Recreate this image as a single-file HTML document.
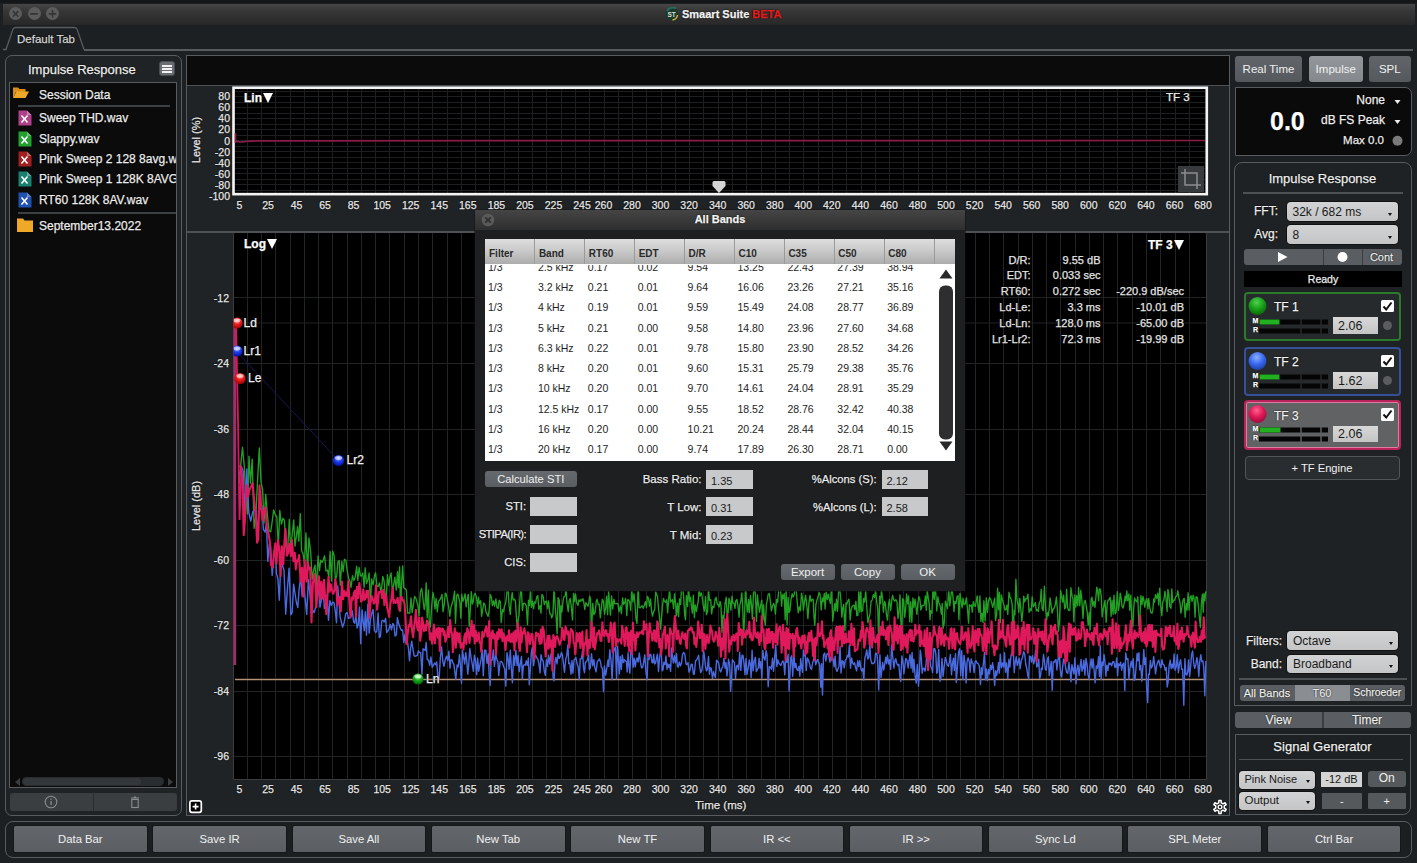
<!DOCTYPE html><html><head><meta charset="utf-8"><style>
*{margin:0;padding:0;box-sizing:border-box;}
html,body{width:1417px;height:863px;overflow:hidden;background:#1d2022;font-family:"Liberation Sans", sans-serif;color:#e8e8e8;}
.a{position:absolute;}
.t{position:absolute;white-space:nowrap;line-height:1;text-shadow:0 0 1.5px #000,0 0 1px #000;-webkit-text-stroke:0.25px currentColor;}
.dd .t,.inp .t{text-shadow:none;-webkit-text-stroke:0;}
.btn{position:absolute;background:linear-gradient(#666a6e,#5a5e62);border-radius:3px;color:#f0f0f0;text-align:center;font-size:12px;}
.inp{position:absolute;background:#c8c9ca;color:#1a1a1a;font-size:11px;}
.dd{position:absolute;background:linear-gradient(#d2d3d4,#c4c5c6);border-radius:4px;color:#1a1a1a;font-size:12px;box-shadow:0 0 0 1px #111;}
.dd:after{content:"";position:absolute;right:5.5px;bottom:5.5px;border-left:2.8px solid transparent;border-right:2.8px solid transparent;border-top:3.6px solid #111;}
</style></head><body>
<div class="a" style="left:0;top:0;width:1417px;height:3px;background:#141618"></div>
<div class="a" style="left:2.5px;top:3.5px;width:1412px;height:21px;background:linear-gradient(#464646,#383838 30%,#2c2c2c 80%,#282828)"></div>
<div class="a" style="left:9.0px;top:7.3px;width:13px;height:13px;border-radius:50%;background:#5c5c5c"></div>
<div class="a" style="left:27.5px;top:7.3px;width:13px;height:13px;border-radius:50%;background:#5c5c5c"></div>
<div class="a" style="left:46.0px;top:7.3px;width:13px;height:13px;border-radius:50%;background:#5c5c5c"></div>
<svg class="a" style="left:0;top:0" width="70" height="28"><path d="M12.8 11.1l5.6 5.6M18.4 11.1l-5.6 5.6" stroke="#353535" stroke-width="1.6"/><path d="M30.3 13.9h7.6" stroke="#353535" stroke-width="1.8"/><path d="M48.8 13.9h7.4M52.5 10v7.8" stroke="#353535" stroke-width="1.6"/></svg>
<svg class="a" style="left:665px;top:7px" width="14" height="14"><circle cx="7" cy="7" r="6.5" fill="#1a3a2a"/><path d="M2 4a6.5 6.5 0 0 1 9-2.5" stroke="#2a6a5a" stroke-width="2" fill="none"/><path d="M12.5 8a6 6 0 0 1-5 5" stroke="#c8b040" stroke-width="1.6" fill="none"/><text x="2.5" y="10" font-size="6.5" font-weight="bold" fill="#ddd" font-family="Liberation Sans">ST</text></svg>
<div class="t" style="left:682px;top:8.5px;font-size:11px;font-weight:bold;color:#f4f4f4">Smaart Suite <span style="color:#e02020">BETA</span></div>
<div class="a" style="left:84px;top:49px;width:1329px;height:1.5px;background:#585c5f"></div>
<svg class="a" style="left:0;top:25px" width="100" height="26"><path d="M3 24.5 H6 L13 4 Q14 2.5 16 2.5 H74 Q76 2.5 77 4 L84 24.5" fill="#1d2022" stroke="#585c5f" stroke-width="1.3"/></svg>
<div class="t" style="left:17px;top:33.5px;font-size:11.5px;color:#d8d8d8">Default Tab</div>
<div class="a" style="left:5px;top:55px;width:177px;height:761px;border:1px solid #585c60;border-radius:7px 7px 7px 7px;background:#202325"></div>
<div class="t" style="left:28px;top:63px;font-size:13px;color:#f0f0f0">Impulse Response</div>
<div class="a" style="left:159px;top:61px;width:16px;height:15px;border-radius:3px;background:#6a6e72;border:1px solid #4a4e52"></div>
<div class="a" style="left:162px;top:65px;width:10px;height:1.5px;background:#f0f0f0;box-shadow:0 3px 0 #f0f0f0,0 6px 0 #f0f0f0"></div>
<div class="a" style="left:9px;top:82px;width:168px;height:706px;background:#0b0b0b;border:1px solid #585c60"></div>
<div class="a" style="left:10px;top:83px;width:166px;height:704px;overflow:hidden">
<svg class="a" style="left:2px;top:2px" width="18" height="16"><path d="M1 2.5h5l1.5 1.5h6v3H4L1 13z" fill="#d8901a"/><path d="M1 13L4.5 6.5H17L13.5 13z" fill="#f0a828"/></svg>
<div class="t" style="left:29px;top:5.5px;font-size:12px;color:#ececec">Session Data</div>
<div class="a" style="left:8px;top:22px;width:152px;height:2px;background:#3c4043"></div>
<svg class="a" style="left:8px;top:27.3px" width="14" height="16"><path d="M0.5 0.5h8.5l4.5 4.5v10.5h-13z" fill="#b0408a"/><path d="M9 0.5v4.5h4.5" fill="#ffffff55"/><path d="M3.5 5.5l6 7M9.5 5.5l-6 7" stroke="#fff" stroke-width="1.6"/></svg>
<div class="t" style="left:29px;top:29.3px;font-size:12px;color:#ececec">Sweep THD.wav</div>
<svg class="a" style="left:8px;top:47.7px" width="14" height="16"><path d="M0.5 0.5h8.5l4.5 4.5v10.5h-13z" fill="#22a030"/><path d="M9 0.5v4.5h4.5" fill="#ffffff55"/><path d="M3.5 5.5l6 7M9.5 5.5l-6 7" stroke="#fff" stroke-width="1.6"/></svg>
<div class="t" style="left:29px;top:49.7px;font-size:12px;color:#ececec">Slappy.wav</div>
<svg class="a" style="left:8px;top:68.0px" width="14" height="16"><path d="M0.5 0.5h8.5l4.5 4.5v10.5h-13z" fill="#a02020"/><path d="M9 0.5v4.5h4.5" fill="#ffffff55"/><path d="M3.5 5.5l6 7M9.5 5.5l-6 7" stroke="#fff" stroke-width="1.6"/></svg>
<div class="t" style="left:29px;top:70.0px;font-size:12px;color:#ececec">Pink Sweep 2 128 8avg.wav</div>
<svg class="a" style="left:8px;top:88.3px" width="14" height="16"><path d="M0.5 0.5h8.5l4.5 4.5v10.5h-13z" fill="#1a8070"/><path d="M9 0.5v4.5h4.5" fill="#ffffff55"/><path d="M3.5 5.5l6 7M9.5 5.5l-6 7" stroke="#fff" stroke-width="1.6"/></svg>
<div class="t" style="left:29px;top:90.3px;font-size:12px;color:#ececec">Pink Sweep 1 128K 8AVG.wav</div>
<svg class="a" style="left:8px;top:108.7px" width="14" height="16"><path d="M0.5 0.5h8.5l4.5 4.5v10.5h-13z" fill="#2050b0"/><path d="M9 0.5v4.5h4.5" fill="#ffffff55"/><path d="M3.5 5.5l6 7M9.5 5.5l-6 7" stroke="#fff" stroke-width="1.6"/></svg>
<div class="t" style="left:29px;top:110.7px;font-size:12px;color:#ececec">RT60 128K 8AV.wav</div>
<div class="a" style="left:8px;top:129px;width:158px;height:2px;background:#3c4043"></div>
<svg class="a" style="left:6px;top:134px" width="18" height="16"><path d="M1 1.5h6l1.5 2h8.5v11.5H1z" fill="#f0a828"/></svg>
<div class="t" style="left:29px;top:136.5px;font-size:12px;color:#ececec">September13.2022</div>
</div>
<div class="a" style="left:22px;top:777px;width:142px;height:9px;border-radius:5px;background:#2a2d2f"></div>
<div class="a" style="left:23px;top:778px;width:118px;height:7px;border-radius:4px;background:#34373a"></div>
<svg class="a" style="left:12px;top:776px" width="165" height="12"><path d="M3 6l5-4v8z" fill="#3a3d40"/><path d="M161 6l-5-4v8z" fill="#3a3d40"/></svg>
<div class="a" style="left:10px;top:793px;width:167px;height:18px;border-radius:3px;background:#3a3e41"></div>
<div class="a" style="left:93px;top:793px;width:1px;height:18px;background:#2a2d30"></div>
<svg class="a" style="left:40px;top:795px" width="120" height="15"><circle cx="11" cy="7" r="5.8" fill="none" stroke="#8a8d90" stroke-width="1.1"/><rect x="10.4" y="6" width="1.3" height="4" fill="#8a8d90"/><rect x="10.4" y="3.6" width="1.3" height="1.3" fill="#8a8d90"/><path d="M91 3h8M94 2h2" stroke="#8a8d90" stroke-width="1.1"/><rect x="91.8" y="4.5" width="6.4" height="8" fill="none" stroke="#8a8d90" stroke-width="1.1"/></svg>
<div class="a" style="left:186px;top:55px;width:1044px;height:761px;border:1px solid #585c60;background:#202325"></div>
<div class="a" style="left:187px;top:56px;width:1042px;height:29px;background:#0b0b0b"></div>
<div class="a" style="left:187px;top:85px;width:1042px;height:1px;background:#4d5154"></div>
<div class="a" style="left:187px;top:231px;width:1042px;height:2px;background:#4d5154"></div>
<svg class="a" style="left:0;top:0" width="1417" height="863">
<rect x="235" y="89" width="970" height="104" fill="#000"/>
<path d="M247.5 89V193 M261.5 89V193 M275.5 89V193 M290.5 89V193 M304.5 89V193 M318.5 89V193 M332.5 89V193 M347.5 89V193 M361.5 89V193 M375.5 89V193 M389.5 89V193 M404.5 89V193 M418.5 89V193 M432.5 89V193 M447.5 89V193 M461.5 89V193 M475.5 89V193 M489.5 89V193 M504.5 89V193 M518.5 89V193 M532.5 89V193 M546.5 89V193 M561.5 89V193 M575.5 89V193 M589.5 89V193 M604.5 89V193 M618.5 89V193 M632.5 89V193 M646.5 89V193 M661.5 89V193 M675.5 89V193 M689.5 89V193 M703.5 89V193 M718.5 89V193 M732.5 89V193 M746.5 89V193 M761.5 89V193 M775.5 89V193 M789.5 89V193 M803.5 89V193 M818.5 89V193 M832.5 89V193 M846.5 89V193 M861.5 89V193 M875.5 89V193 M889.5 89V193 M903.5 89V193 M918.5 89V193 M932.5 89V193 M946.5 89V193 M960.5 89V193 M975.5 89V193 M989.5 89V193 M1003.5 89V193 M1018.5 89V193 M1032.5 89V193 M1046.5 89V193 M1060.5 89V193 M1075.5 89V193 M1089.5 89V193 M1103.5 89V193 M1117.5 89V193 M1132.5 89V193 M1146.5 89V193 M1160.5 89V193 M1175.5 89V193 M1189.5 89V193 M235 91.5H1205 M235 96.5H1205 M235 102.5H1205 M235 107.5H1205 M235 113.5H1205 M235 118.5H1205 M235 124.5H1205 M235 129.5H1205 M235 135.5H1205 M235 140.5H1205 M235 146.5H1205 M235 151.5H1205 M235 157.5H1205 M235 162.5H1205 M235 168.5H1205 M235 173.5H1205 M235 179.5H1205 M235 184.5H1205 M235 190.5H1205" stroke="#1c1f1f" stroke-width="1"/>
<rect x="233.5" y="87.75" width="973.3" height="106.4" fill="none" stroke="#f4f4f4" stroke-width="2.6"/>
<path d="M235.5 133V143 M235.5 140.5 Q238 142.5 243 141.8 T260 140.8 L1205 140.5" stroke="#8a1c48" stroke-width="1.7" fill="none"/>
<path d="M714 181h10q1.5 0 1.5 1.5v3.5l-6.5 7-6.5-7v-3.5q0-1.5 1.5-1.5z" fill="#d4d4d4"/>
</svg>
<div class="t" style="left:244px;top:92px;font-size:12px;font-weight:bold;color:#fff">Lin<i style="display:inline-block;vertical-align:top;margin-top:1px;margin-left:1px;width:0;height:0;border-left:5px solid transparent;border-right:5px solid transparent;border-top:10px solid #fff"></i></div>
<div class="t" style="left:1166px;top:92px;font-size:11.5px;color:#eee">TF 3</div>
<div class="a" style="left:1178px;top:166px;width:26px;height:26px;background:#383b3e"></div>
<svg class="a" style="left:1178px;top:166px" width="26" height="26"><path d="M7 3V19H23 M3 7H19V23" stroke="#8a8d90" stroke-width="1.5" fill="none"/></svg>
<div class="t" style="right:1187px;top:91.2px;font-size:10.5px;color:#e8e8e8">80</div>
<div class="t" style="right:1187px;top:102.3px;font-size:10.5px;color:#e8e8e8">60</div>
<div class="t" style="right:1187px;top:113.4px;font-size:10.5px;color:#e8e8e8">40</div>
<div class="t" style="right:1187px;top:124.4px;font-size:10.5px;color:#e8e8e8">20</div>
<div class="t" style="right:1187px;top:135.5px;font-size:10.5px;color:#e8e8e8">0</div>
<div class="t" style="right:1187px;top:146.6px;font-size:10.5px;color:#e8e8e8">-20</div>
<div class="t" style="right:1187px;top:157.7px;font-size:10.5px;color:#e8e8e8">-40</div>
<div class="t" style="right:1187px;top:168.8px;font-size:10.5px;color:#e8e8e8">-60</div>
<div class="t" style="right:1187px;top:179.8px;font-size:10.5px;color:#e8e8e8">-80</div>
<div class="t" style="right:1187px;top:190.9px;font-size:10.5px;color:#e8e8e8">-100</div>
<div class="t" style="left:147px;width:100px;text-align:center;top:134px;height:12px;font-size:11px;color:#e8e8e8;transform:rotate(-90deg);transform-origin:50px 6px;">Level (%)</div>
<div class="t" style="left:219.4px;width:40px;text-align:center;top:199.5px;font-size:10.5px;color:#e8e8e8">5</div>
<div class="t" style="left:248.0px;width:40px;text-align:center;top:199.5px;font-size:10.5px;color:#e8e8e8">25</div>
<div class="t" style="left:276.5px;width:40px;text-align:center;top:199.5px;font-size:10.5px;color:#e8e8e8">45</div>
<div class="t" style="left:305.1px;width:40px;text-align:center;top:199.5px;font-size:10.5px;color:#e8e8e8">65</div>
<div class="t" style="left:333.6px;width:40px;text-align:center;top:199.5px;font-size:10.5px;color:#e8e8e8">85</div>
<div class="t" style="left:362.2px;width:40px;text-align:center;top:199.5px;font-size:10.5px;color:#e8e8e8">105</div>
<div class="t" style="left:390.7px;width:40px;text-align:center;top:199.5px;font-size:10.5px;color:#e8e8e8">125</div>
<div class="t" style="left:419.3px;width:40px;text-align:center;top:199.5px;font-size:10.5px;color:#e8e8e8">145</div>
<div class="t" style="left:447.8px;width:40px;text-align:center;top:199.5px;font-size:10.5px;color:#e8e8e8">165</div>
<div class="t" style="left:476.4px;width:40px;text-align:center;top:199.5px;font-size:10.5px;color:#e8e8e8">185</div>
<div class="t" style="left:504.9px;width:40px;text-align:center;top:199.5px;font-size:10.5px;color:#e8e8e8">205</div>
<div class="t" style="left:533.5px;width:40px;text-align:center;top:199.5px;font-size:10.5px;color:#e8e8e8">225</div>
<div class="t" style="left:562.0px;width:40px;text-align:center;top:199.5px;font-size:10.5px;color:#e8e8e8">245</div>
<div class="t" style="left:583.5px;width:40px;text-align:center;top:199.5px;font-size:10.5px;color:#e8e8e8">260</div>
<div class="t" style="left:612.0px;width:40px;text-align:center;top:199.5px;font-size:10.5px;color:#e8e8e8">280</div>
<div class="t" style="left:640.5px;width:40px;text-align:center;top:199.5px;font-size:10.5px;color:#e8e8e8">300</div>
<div class="t" style="left:669.1px;width:40px;text-align:center;top:199.5px;font-size:10.5px;color:#e8e8e8">320</div>
<div class="t" style="left:697.7px;width:40px;text-align:center;top:199.5px;font-size:10.5px;color:#e8e8e8">340</div>
<div class="t" style="left:726.2px;width:40px;text-align:center;top:199.5px;font-size:10.5px;color:#e8e8e8">360</div>
<div class="t" style="left:754.8px;width:40px;text-align:center;top:199.5px;font-size:10.5px;color:#e8e8e8">380</div>
<div class="t" style="left:783.3px;width:40px;text-align:center;top:199.5px;font-size:10.5px;color:#e8e8e8">400</div>
<div class="t" style="left:811.8px;width:40px;text-align:center;top:199.5px;font-size:10.5px;color:#e8e8e8">420</div>
<div class="t" style="left:840.4px;width:40px;text-align:center;top:199.5px;font-size:10.5px;color:#e8e8e8">440</div>
<div class="t" style="left:869.0px;width:40px;text-align:center;top:199.5px;font-size:10.5px;color:#e8e8e8">460</div>
<div class="t" style="left:897.5px;width:40px;text-align:center;top:199.5px;font-size:10.5px;color:#e8e8e8">480</div>
<div class="t" style="left:926.0px;width:40px;text-align:center;top:199.5px;font-size:10.5px;color:#e8e8e8">500</div>
<div class="t" style="left:954.6px;width:40px;text-align:center;top:199.5px;font-size:10.5px;color:#e8e8e8">520</div>
<div class="t" style="left:983.2px;width:40px;text-align:center;top:199.5px;font-size:10.5px;color:#e8e8e8">540</div>
<div class="t" style="left:1011.7px;width:40px;text-align:center;top:199.5px;font-size:10.5px;color:#e8e8e8">560</div>
<div class="t" style="left:1040.2px;width:40px;text-align:center;top:199.5px;font-size:10.5px;color:#e8e8e8">580</div>
<div class="t" style="left:1068.8px;width:40px;text-align:center;top:199.5px;font-size:10.5px;color:#e8e8e8">600</div>
<div class="t" style="left:1097.3px;width:40px;text-align:center;top:199.5px;font-size:10.5px;color:#e8e8e8">620</div>
<div class="t" style="left:1125.9px;width:40px;text-align:center;top:199.5px;font-size:10.5px;color:#e8e8e8">640</div>
<div class="t" style="left:1154.5px;width:40px;text-align:center;top:199.5px;font-size:10.5px;color:#e8e8e8">660</div>
<div class="t" style="left:1183.0px;width:40px;text-align:center;top:199.5px;font-size:10.5px;color:#e8e8e8">680</div>
<svg class="a" style="left:0;top:0" width="1417" height="863">
<rect x="233" y="233" width="974" height="546" fill="#000"/>
<path d="M247.5 233V779 M261.5 233V779 M275.5 233V779 M290.5 233V779 M304.5 233V779 M318.5 233V779 M332.5 233V779 M347.5 233V779 M361.5 233V779 M375.5 233V779 M389.5 233V779 M404.5 233V779 M418.5 233V779 M432.5 233V779 M447.5 233V779 M461.5 233V779 M475.5 233V779 M489.5 233V779 M504.5 233V779 M518.5 233V779 M532.5 233V779 M546.5 233V779 M561.5 233V779 M575.5 233V779 M589.5 233V779 M604.5 233V779 M618.5 233V779 M632.5 233V779 M646.5 233V779 M661.5 233V779 M675.5 233V779 M689.5 233V779 M703.5 233V779 M718.5 233V779 M732.5 233V779 M746.5 233V779 M761.5 233V779 M775.5 233V779 M789.5 233V779 M803.5 233V779 M818.5 233V779 M832.5 233V779 M846.5 233V779 M861.5 233V779 M875.5 233V779 M889.5 233V779 M903.5 233V779 M918.5 233V779 M932.5 233V779 M946.5 233V779 M960.5 233V779 M975.5 233V779 M989.5 233V779 M1003.5 233V779 M1018.5 233V779 M1032.5 233V779 M1046.5 233V779 M1060.5 233V779 M1075.5 233V779 M1089.5 233V779 M1103.5 233V779 M1117.5 233V779 M1132.5 233V779 M1146.5 233V779 M1160.5 233V779 M1175.5 233V779 M1189.5 233V779 M233 297.5H1207 M233 363.5H1207 M233 429.5H1207 M233 494.5H1207 M233 560.5H1207 M233 625.5H1207 M233 691.5H1207 M233 756.5H1207 M233 323H1207" stroke="#212424" stroke-width="1"/>
<path d="M233.5 233V779.5H1206.5V233" stroke="#3a3d40" stroke-width="1" fill="none"/>
<path d="M235 679.5H1206" stroke="#b89078" stroke-width="1.5"/>
<path d="M239.4 483.4L240.9 463.1L242.5 447.2L244.4 467.8L245.9 495.5L247.4 514.0L249.0 456.2L250.5 483.1L252.2 459.1L254.1 528.3L255.9 515.2L257.4 483.6L259.3 448.0L261.1 482.9L262.6 489.4L264.0 523.0L265.7 494.5L267.5 515.7L269.0 530.6L270.7 531.9L272.2 521.3L273.6 510.0L275.2 514.7L276.8 517.0L278.3 546.5L279.8 510.5L281.4 524.2L282.9 518.3L284.4 520.2L286.1 547.1L287.6 551.1L289.3 519.5L290.6 551.2L292.2 534.2L293.7 520.0L295.0 546.1L296.3 536.5L297.6 526.5L298.8 541.1L300.3 513.6L301.6 551.0L303.0 553.5L304.5 563.4L305.9 532.9L307.6 572.4L308.9 537.9L310.6 551.1L312.2 579.2L313.7 570.0L315.0 565.1L316.6 585.8L318.1 555.9L319.5 570.7L320.7 560.1L322.1 562.4L323.2 559.7L324.6 555.8L326.0 570.9L327.6 570.1L328.8 577.7L330.1 551.5L331.5 581.1L332.6 550.9L334.1 555.4L335.4 579.7L336.7 575.9L337.9 561.9L339.2 560.5L340.3 585.2L341.8 561.5L343.2 571.7L344.4 559.3L345.9 560.3L347.0 569.3L348.5 578.0L349.9 581.1L351.0 587.5L352.5 575.6L353.9 580.6L355.2 577.2L356.7 566.3L357.8 580.4L359.1 567.5L360.5 575.9L361.6 576.1L362.8 572.9L364.1 587.1L365.2 567.8L366.5 583.6L367.7 580.5L369.1 573.0L370.5 604.1L371.6 578.9L373.1 584.8L374.6 575.1L375.6 572.8L377.0 586.5L378.4 586.0L379.5 582.9L380.6 590.5L381.6 588.9L382.8 576.4L384.1 581.1L385.2 596.1L386.4 597.8L387.4 574.6L388.7 585.3L389.8 577.6L391.1 573.0L392.5 592.9L393.6 585.2L394.9 577.2L396.3 590.0L397.5 571.6L398.5 587.6L399.6 566.8L400.6 611.0L401.6 582.4L402.7 566.0L403.7 587.7L405.0 588.5L406.4 590.2L407.5 613.1L408.4 612.9L409.8 613.2L411.0 597.9L412.2 612.6L413.5 604.0L414.6 596.4L415.7 597.6L417.0 602.2L418.1 606.9L419.0 616.0L420.4 591.8L421.7 588.4L422.9 598.5L424.2 609.5L425.1 605.4L426.2 582.8L427.2 617.9L428.4 589.9L429.3 622.4L430.4 627.0L431.7 606.0L432.9 592.3L433.9 597.5L435.0 609.0L436.1 598.5L437.3 611.9L438.5 601.2L439.7 600.1L441.0 597.6L442.0 594.4L443.0 611.6L444.2 604.7L445.3 593.1L446.3 594.3L447.6 601.1L448.5 606.0L449.8 616.2L450.9 607.6L452.1 603.7L453.2 600.2L454.6 591.1L455.5 623.3L456.8 595.0L457.9 594.1L458.8 597.9L459.9 602.4L460.9 618.2L461.8 594.3L462.9 601.3L464.1 597.6L465.1 593.8L466.1 606.9L467.3 598.3L468.3 594.4L469.2 626.2L470.2 612.0L471.3 591.7L472.3 604.0L473.2 601.6L474.1 595.0L475.1 593.4L476.3 596.5L477.6 606.9L478.5 597.1L479.4 603.8L480.7 600.7L481.6 616.3L482.7 609.5L483.8 603.0L485.0 604.9L485.9 611.7L487.1 614.1L488.1 616.4L489.2 609.9L490.2 594.5L491.3 596.7L492.4 605.7L493.5 600.8L494.6 606.2L495.9 599.0L497.0 607.6L498.1 608.3L499.2 600.1L500.3 601.9L501.2 622.5L502.5 609.6L503.5 611.8L504.5 605.9L505.7 603.2L506.8 593.3L507.9 584.4L509.1 605.9L510.3 614.5L511.2 600.4L512.2 592.7L513.1 600.0L514.4 599.1L515.4 601.1L516.3 615.3L517.2 627.6L518.2 619.5L519.0 615.4L520.0 597.6L521.2 585.3L522.4 610.4L523.4 603.6L524.2 603.2L525.2 603.9L526.3 605.9L527.5 624.7L528.5 600.1L529.5 605.5L530.5 589.3L531.4 607.4L532.6 601.1L533.6 608.7L534.5 602.0L535.6 603.1L536.7 597.0L537.8 595.6L538.8 609.3L540.0 605.7L541.0 613.1L541.9 594.5L543.1 596.1L544.3 604.7L545.5 601.3L546.5 601.1L547.5 608.6L548.5 600.9L549.8 613.8L550.9 614.1L551.7 617.8L552.9 614.8L554.1 586.8L555.2 606.8L556.1 617.2L557.1 633.8L558.1 597.6L559.3 600.2L560.1 627.5L561.0 605.6L562.0 611.8L563.1 600.3L563.9 597.1L565.2 595.9L566.1 587.9L567.0 603.1L568.2 611.6L569.1 601.6L570.2 598.5L571.3 606.4L572.5 620.0L573.6 593.3L574.6 601.7L575.5 593.9L576.8 603.4L578.0 605.4L578.8 600.0L580.0 601.5L580.8 599.6L581.7 600.9L582.9 598.6L583.7 601.7L584.8 609.3L585.9 602.6L586.8 604.1L587.9 606.3L588.8 603.3L589.7 596.2L590.5 599.0L591.5 634.1L592.7 603.4L593.9 614.6L595.1 612.6L596.3 601.2L597.1 599.3L598.2 604.7L599.2 604.0L600.3 617.7L601.4 607.8L602.4 599.2L603.4 601.3L604.5 614.2L605.6 608.8L606.6 596.2L607.6 614.7L608.6 590.9L609.6 604.7L610.4 615.1L611.6 595.9L612.7 609.1L613.9 599.4L614.8 603.8L616.0 603.7L617.0 603.5L618.0 603.9L619.0 611.9L620.3 606.2L621.4 613.5L622.6 597.8L623.6 604.3L624.8 602.3L625.6 598.3L626.8 615.6L627.7 599.8L628.8 599.9L629.8 602.5L630.7 610.5L631.7 589.9L632.9 601.8L634.0 593.7L635.0 604.3L635.9 618.2L637.0 623.4L638.2 581.4L639.1 607.6L640.1 607.8L641.1 606.7L642.1 605.7L643.2 608.3L644.4 605.0L645.4 601.6L646.5 607.4L647.4 596.3L648.5 598.4L649.5 606.2L650.6 599.2L651.6 611.4L652.5 616.2L653.5 611.9L654.7 609.6L655.7 591.9L656.5 594.1L657.6 597.0L658.4 607.4L659.5 617.3L660.5 629.1L661.7 615.6L662.6 605.2L663.5 598.4L664.4 601.1L665.6 602.2L666.7 599.7L667.6 612.9L668.7 598.6L669.6 589.3L670.5 602.0L671.4 600.8L672.4 599.5L673.6 608.6L674.5 593.8L675.6 603.8L676.5 615.8L677.5 603.2L678.6 616.7L679.5 598.9L680.6 604.6L681.5 588.0L682.5 586.7L683.6 595.8L684.6 614.4L685.5 619.8L686.4 595.6L687.6 606.5L688.4 586.7L689.6 601.4L690.6 597.2L691.4 606.1L692.4 613.1L693.3 595.2L694.4 617.6L695.3 605.0L696.5 611.4L697.4 605.5L698.3 600.8L699.1 588.4L700.1 596.1L701.3 592.9L702.1 596.3L703.3 605.9L704.4 611.1L705.6 596.5L706.4 614.7L707.6 611.3L708.4 587.8L709.5 600.3L710.7 599.6L711.6 613.8L712.7 606.3L713.9 607.7L715.1 599.3L716.1 597.3L717.1 603.8L718.2 605.0L719.1 607.1L720.1 601.4L721.0 605.9L722.0 632.4L722.9 615.4L723.9 618.1L725.0 604.2L726.2 597.3L727.0 613.3L728.1 613.0L728.9 598.2L729.9 601.1L730.9 610.2L732.0 596.1L732.9 603.0L734.1 603.4L735.0 608.3L735.8 600.9L736.9 599.4L738.0 606.2L739.1 617.1L739.9 604.6L740.8 601.3L741.8 592.9L742.7 606.0L743.6 638.1L744.5 617.8L745.5 587.4L746.4 602.2L747.5 612.0L748.5 599.5L749.3 612.7L750.5 595.3L751.5 604.9L752.4 619.0L753.4 594.6L754.5 583.5L755.4 595.4L756.5 621.5L757.4 594.8L758.4 604.0L759.5 612.1L760.6 605.6L761.8 600.1L762.7 620.4L763.6 604.7L764.4 619.4L765.3 625.2L766.4 604.8L767.2 600.3L768.2 594.3L769.4 593.5L770.5 602.6L771.4 610.9L772.4 606.6L773.6 603.4L774.5 605.9L775.4 614.1L776.6 599.3L777.7 602.5L778.6 591.2L779.8 581.5L780.7 590.7L781.6 606.1L782.5 594.8L783.3 598.6L784.2 593.5L785.2 619.7L786.1 589.7L787.1 624.5L788.1 597.4L789.0 612.4L790.0 610.7L791.0 599.3L792.2 593.6L793.1 597.0L794.2 594.7L795.1 585.9L796.2 589.6L797.1 600.8L798.2 612.8L799.3 606.9L800.4 610.7L801.5 593.2L802.5 598.3L803.4 610.1L804.5 601.3L805.6 595.3L806.8 605.2L807.9 618.6L808.9 603.6L810.0 595.4L811.0 601.3L812.2 599.3L813.2 599.4L814.0 616.7L814.8 625.2L815.9 604.4L817.0 600.1L818.1 596.4L819.2 592.6L820.0 594.0L821.2 610.0L822.3 597.9L823.2 601.6L824.3 593.5L825.1 609.0L826.1 592.2L827.3 599.6L828.3 594.1L829.4 599.3L830.4 603.5L831.5 586.3L832.7 621.2L833.6 613.0L834.6 603.7L835.5 610.8L836.5 599.2L837.5 611.3L838.6 591.4L839.7 588.6L840.8 599.4L841.9 617.1L842.7 608.4L843.7 604.4L844.9 630.5L846.0 602.7L846.8 604.4L848.0 600.6L849.0 599.2L850.2 619.9L851.1 609.7L852.1 606.5L853.0 605.6L853.9 605.1L854.9 609.6L855.9 601.3L856.8 615.6L857.9 615.4L858.8 590.3L859.8 612.0L860.7 590.9L861.5 611.5L862.7 610.7L863.5 598.5L864.6 602.0L865.7 591.1L866.9 608.7L867.9 622.8L868.8 618.5L870.0 613.9L871.1 601.3L872.3 599.9L873.3 594.7L874.5 597.6L875.6 590.1L876.6 600.9L877.8 609.2L878.7 641.2L879.7 596.1L880.6 603.7L881.4 590.7L882.5 597.5L883.4 612.1L884.6 601.3L885.4 603.6L886.4 614.4L887.5 620.0L888.6 604.2L889.5 599.5L890.7 610.5L891.8 599.9L892.6 595.3L893.6 599.7L894.6 601.0L895.8 599.6L897.0 602.0L898.0 618.5L898.9 613.3L900.0 594.9L900.8 619.9L901.7 638.0L902.7 598.6L903.6 599.9L904.7 617.2L905.7 608.6L906.6 594.0L907.7 603.9L908.6 596.0L909.7 621.9L910.7 601.8L911.8 622.3L912.9 598.0L913.9 607.5L915.0 599.2L915.9 606.3L916.9 614.4L918.0 602.4L918.9 596.7L919.9 599.7L920.9 610.1L922.1 605.5L923.2 605.7L924.2 605.2L925.4 595.9L926.3 610.3L927.2 590.1L928.2 597.5L929.2 604.1L930.0 619.7L930.9 610.7L931.9 613.1L933.1 585.9L934.2 599.4L935.1 584.8L936.0 596.3L936.8 611.0L937.9 596.8L938.7 602.2L939.5 603.9L940.5 607.7L941.4 614.2L942.2 603.5L943.1 628.4L944.2 623.2L945.4 601.2L946.5 605.0L947.5 608.5L948.7 588.0L949.8 605.8L950.7 598.1L951.8 588.2L953.0 596.7L954.0 611.7L954.8 601.5L955.9 603.6L957.1 596.4L958.1 595.7L958.9 619.8L960.0 593.5L961.1 601.0L962.1 607.9L963.0 598.2L964.1 604.8L965.2 603.9L966.4 597.8L967.5 609.0L968.6 623.1L969.4 604.8L970.3 606.0L971.4 604.9L972.3 612.1L973.3 601.6L974.4 605.5L975.3 606.4L976.4 600.4L977.2 595.9L978.1 607.1L979.0 612.5L979.9 595.9L980.9 621.5L982.0 613.4L983.0 622.4L983.9 600.8L985.1 621.0L986.3 597.8L987.4 612.5L988.4 601.6L989.5 597.5L990.6 599.3L991.7 602.8L992.7 607.3L993.7 603.1L994.7 598.2L995.5 620.5L996.6 614.9L997.6 588.2L998.5 609.9L999.4 592.3L1000.3 622.8L1001.3 594.8L1002.3 599.5L1003.3 602.9L1004.1 605.6L1004.9 610.0L1005.9 609.6L1006.8 605.1L1007.8 614.4L1009.0 592.3L1010.1 597.7L1011.1 599.0L1012.2 604.9L1013.1 640.0L1014.1 610.3L1014.9 614.7L1015.9 579.3L1016.9 599.2L1018.0 604.7L1018.9 612.3L1019.7 598.4L1020.6 606.1L1021.8 621.5L1022.8 612.0L1023.7 596.2L1024.7 601.9L1025.8 598.7L1026.8 598.9L1027.9 594.1L1029.1 612.3L1030.3 608.8L1031.2 610.8L1032.2 596.8L1033.2 606.8L1034.2 605.2L1035.3 602.6L1036.4 610.9L1037.4 609.7L1038.3 611.3L1039.2 603.4L1040.4 600.9L1041.2 589.3L1042.1 608.7L1043.2 610.8L1044.4 586.3L1045.4 605.5L1046.6 620.1L1047.5 612.6L1048.3 615.9L1049.1 609.6L1050.1 597.9L1051.0 604.7L1052.1 613.1L1053.3 608.7L1054.1 608.1L1055.3 604.8L1056.4 597.0L1057.4 610.0L1058.5 631.2L1059.5 620.8L1060.6 590.4L1061.8 597.7L1062.6 602.1L1063.6 595.2L1064.7 608.9L1065.7 607.2L1066.6 589.2L1067.6 607.6L1068.7 610.4L1069.9 610.3L1070.9 587.7L1072.1 596.2L1073.0 598.9L1073.9 621.9L1074.8 594.9L1075.9 607.1L1076.7 595.6L1077.8 605.5L1078.6 587.5L1079.8 605.8L1080.8 590.3L1081.8 599.5L1083.0 618.4L1084.1 602.5L1085.2 600.4L1086.1 604.8L1087.1 611.1L1088.2 625.2L1089.2 612.6L1090.1 630.0L1091.1 599.6L1092.0 597.3L1092.9 606.3L1094.0 601.3L1095.0 607.3L1095.9 597.2L1096.8 587.1L1097.6 590.2L1098.6 600.7L1099.4 588.9L1100.4 589.2L1101.3 597.2L1102.2 616.9L1103.1 610.2L1104.1 605.0L1105.0 600.3L1106.2 622.3L1107.2 604.2L1108.1 600.1L1109.1 599.6L1110.2 597.3L1111.1 616.3L1112.1 600.3L1113.1 614.3L1114.0 595.3L1115.1 613.9L1116.2 611.9L1117.3 591.6L1118.4 610.3L1119.4 603.9L1120.2 593.1L1121.2 598.6L1122.0 606.1L1123.1 608.1L1124.2 603.1L1125.1 596.1L1125.9 600.8L1126.8 590.9L1127.7 600.6L1128.9 593.9L1129.7 610.3L1130.8 595.1L1131.8 619.0L1132.9 626.8L1133.7 608.2L1134.6 597.9L1135.8 600.8L1136.9 601.7L1137.8 596.8L1138.9 625.3L1139.9 617.7L1140.9 595.6L1142.0 604.6L1142.9 596.5L1143.7 599.4L1144.8 607.2L1145.9 600.9L1146.9 598.5L1147.9 609.0L1148.7 598.6L1149.7 606.9L1150.9 612.6L1152.0 613.2L1152.8 610.3L1153.7 599.0L1154.6 602.2L1155.5 594.7L1156.7 598.3L1157.8 593.2L1158.7 605.0L1159.7 588.3L1160.6 604.6L1161.8 615.6L1162.8 601.6L1163.8 600.3L1165.0 591.3L1165.9 597.1L1167.1 611.5L1167.9 589.4L1168.8 593.7L1169.8 606.9L1171.0 608.2L1171.8 588.9L1172.7 602.6L1173.6 600.4L1174.5 600.2L1175.7 596.7L1176.8 596.1L1177.8 590.8L1178.9 597.8L1180.1 603.3L1180.9 613.1L1182.0 607.2L1183.0 600.0L1184.2 598.4L1185.1 617.3L1186.3 603.6L1187.1 610.0L1188.1 592.8L1189.1 610.0L1190.0 597.6L1191.0 595.7L1192.1 601.3L1193.2 595.1L1194.1 598.9L1195.1 617.3L1196.0 597.0L1197.2 597.1L1198.1 603.6L1199.3 616.4L1200.4 627.5L1201.3 604.0L1202.4 594.1L1203.2 612.3L1204.0 593.5L1204.9 600.8L1205.8 591.3" stroke="#22a024" stroke-width="1.35" fill="none" stroke-linejoin="round"/>
<path d="M239.4 475.1L241.3 466.4L243.2 471.2L245.0 514.6L246.8 468.9L248.8 512.5L250.7 521.0L252.7 511.9L254.3 510.2L255.8 510.2L257.4 535.8L258.8 510.1L260.2 509.6L261.8 505.7L263.4 529.5L265.0 532.1L266.5 523.3L267.8 561.4L269.3 544.5L270.6 546.2L272.2 575.4L273.8 556.2L275.1 546.9L276.5 573.8L277.9 578.5L279.3 600.3L280.9 560.7L282.4 565.2L284.0 570.2L285.7 614.2L287.4 589.1L289.1 568.1L290.8 614.8L292.2 612.7L293.6 584.2L295.1 594.0L296.3 602.0L297.8 607.5L299.1 589.3L300.8 577.0L302.1 596.2L303.8 584.9L305.3 600.4L306.7 614.5L308.4 579.4L309.9 594.2L311.5 613.5L313.1 610.9L314.2 612.5L315.9 606.6L317.3 597.7L318.8 585.9L320.0 607.1L321.5 599.3L322.8 584.8L324.4 608.6L325.7 604.2L327.1 594.6L328.5 620.3L329.9 600.6L331.4 605.3L332.9 602.0L334.0 602.9L335.2 610.4L336.5 622.7L337.7 586.0L339.0 601.1L340.1 616.8L341.4 622.0L342.6 627.1L344.1 623.0L345.7 613.7L347.1 612.5L348.5 618.4L349.8 617.9L350.9 616.4L352.3 610.9L353.6 621.9L354.8 623.2L356.0 614.4L357.1 628.1L358.3 624.7L359.5 607.1L360.7 643.8L362.1 609.9L363.1 621.1L364.3 630.8L365.3 611.8L366.5 635.2L367.8 604.3L369.2 633.1L370.5 619.0L371.7 613.6L373.1 609.6L374.4 630.3L375.7 632.5L376.8 631.3L378.1 613.0L379.3 637.6L380.4 636.5L381.7 621.3L382.9 620.2L384.2 622.0L385.6 618.4L386.7 632.5L387.8 631.3L389.2 627.9L390.2 624.5L391.5 629.8L392.8 623.5L393.9 625.2L395.1 636.1L396.4 634.8L397.4 617.6L398.8 624.1L399.8 626.7L401.2 630.2L402.6 630.0L403.8 642.5L404.9 634.4L406.1 643.5L407.5 642.1L408.5 648.9L409.5 660.7L410.7 647.6L411.7 641.1L413.1 650.1L414.1 655.7L415.1 656.3L416.1 655.8L417.2 655.5L418.5 650.8L419.5 652.5L420.7 652.6L422.0 674.2L423.0 648.9L424.2 649.7L425.2 650.5L426.2 642.5L427.2 659.8L428.5 659.9L429.7 665.2L430.9 657.0L432.2 667.3L433.5 664.9L434.6 663.0L435.6 664.7L436.7 662.0L438.0 678.4L439.1 678.9L440.4 657.0L441.6 647.0L442.7 660.5L444.0 666.3L445.3 659.6L446.5 656.2L447.8 660.5L448.9 651.2L450.0 668.3L450.9 659.9L451.9 659.6L452.9 662.8L453.9 664.3L454.9 672.4L455.8 679.3L457.1 665.0L458.2 667.0L459.5 654.7L460.4 665.2L461.5 683.3L462.5 650.8L463.5 656.8L464.7 664.0L465.7 652.7L466.6 659.5L467.8 674.1L468.7 665.0L469.8 648.5L471.1 658.1L472.2 663.9L473.4 671.4L474.4 655.3L475.5 660.3L476.7 674.6L477.7 658.2L478.7 671.2L479.9 665.1L481.0 659.9L482.3 650.0L483.3 675.8L484.6 650.3L485.8 650.2L487.0 663.3L488.2 653.8L489.1 674.0L490.2 685.5L491.1 659.8L492.2 660.1L493.3 649.9L494.4 666.4L495.7 654.8L496.9 659.4L497.9 662.1L498.8 675.5L500.1 662.0L501.3 661.3L502.5 662.9L503.7 666.7L504.7 669.1L505.8 686.0L507.0 652.6L507.9 657.4L509.1 669.2L510.3 650.1L511.4 669.3L512.4 682.8L513.6 655.8L514.6 665.4L515.9 650.4L517.1 665.7L518.0 655.6L519.2 671.6L520.3 663.8L521.5 656.5L522.3 679.1L523.4 665.3L524.3 664.8L525.3 665.2L526.3 660.8L527.2 665.4L528.4 658.0L529.3 684.7L530.5 666.9L531.4 652.1L532.3 647.5L533.6 665.6L534.7 656.2L535.8 655.6L537.0 658.1L538.0 659.6L538.9 663.7L540.1 672.8L541.0 654.6L542.1 659.7L543.2 661.1L544.2 670.8L545.3 675.4L546.5 659.8L547.6 666.4L548.5 655.1L549.8 664.1L550.9 653.9L552.1 660.1L553.2 677.8L554.1 680.8L555.0 661.5L555.9 657.5L557.0 663.8L558.1 654.0L559.2 658.2L560.3 656.8L561.4 652.4L562.4 654.8L563.4 663.4L564.5 672.3L565.7 659.7L566.8 655.3L567.9 644.7L568.7 663.6L569.8 663.0L571.0 674.2L572.0 660.6L572.9 673.1L574.1 659.7L575.1 658.7L575.9 657.3L577.1 664.0L578.2 666.9L579.3 679.7L580.2 659.0L581.4 658.8L582.5 651.0L583.6 668.5L584.5 672.7L585.4 662.4L586.3 661.6L587.4 660.1L588.4 655.1L589.4 669.5L590.3 668.2L591.5 653.6L592.7 665.8L593.8 659.7L594.9 667.9L596.1 671.9L597.3 661.3L598.4 660.7L599.4 658.9L600.4 661.4L601.3 667.0L602.4 668.4L603.5 691.7L604.4 665.9L605.7 675.1L606.7 669.0L608.0 660.0L608.8 666.4L609.8 649.8L611.0 660.1L612.1 679.7L613.3 652.9L614.3 649.0L615.4 647.1L616.6 678.7L617.4 646.4L618.4 659.9L619.3 673.9L620.2 656.4L621.3 669.5L622.3 655.0L623.5 662.6L624.5 659.6L625.4 660.9L626.4 661.5L627.2 672.0L628.1 652.7L628.9 665.4L629.9 673.2L630.9 649.4L632.0 649.1L633.1 667.5L634.1 658.2L635.3 666.9L636.1 660.4L637.0 658.0L638.1 662.0L639.3 653.0L640.4 661.8L641.6 667.9L642.7 667.5L643.6 662.3L644.8 654.7L645.9 671.6L647.1 679.8L647.9 657.8L649.0 659.6L649.9 654.2L651.0 654.8L652.0 662.6L652.9 662.9L653.7 654.3L654.6 664.0L655.5 663.3L656.3 659.3L657.4 654.1L658.5 671.6L659.5 658.4L660.4 652.4L661.3 652.6L662.2 670.7L663.0 669.8L663.9 662.3L665.1 664.6L666.0 655.9L667.0 669.2L667.9 663.9L668.7 667.3L669.6 664.7L670.6 671.4L671.5 648.0L672.5 657.4L673.4 663.0L674.4 655.6L675.5 662.9L676.5 653.5L677.4 666.6L678.3 667.1L679.2 662.0L680.4 665.9L681.4 663.3L682.6 654.1L683.7 652.5L684.9 654.4L686.0 664.1L687.1 664.6L688.0 662.6L689.0 672.1L690.0 670.2L691.2 664.2L692.2 664.4L693.4 674.2L694.3 674.1L695.5 660.9L696.5 660.1L697.6 658.0L698.6 655.3L699.8 667.0L700.7 672.6L701.9 670.1L702.7 664.0L703.6 650.7L704.6 657.8L705.4 665.9L706.4 670.9L707.3 669.6L708.5 656.5L709.4 674.2L710.3 667.7L711.3 668.4L712.5 678.4L713.5 671.8L714.3 674.8L715.4 677.4L716.6 660.2L717.6 661.4L718.7 663.3L719.9 670.5L720.7 672.0L721.9 668.1L722.8 667.0L723.9 658.5L725.1 668.2L726.0 662.4L726.9 676.0L727.7 670.4L728.5 659.3L729.7 664.3L730.6 691.4L731.5 677.3L732.4 659.8L733.5 661.5L734.4 662.3L735.5 678.5L736.6 666.1L737.6 665.2L738.6 669.8L739.7 652.3L740.8 670.4L742.0 655.3L743.0 655.4L743.9 662.4L745.0 674.8L746.0 658.5L747.0 674.4L748.2 667.9L749.3 660.0L750.2 664.0L751.1 677.5L752.1 650.2L753.1 670.9L754.2 661.4L755.4 657.3L756.3 671.8L757.2 669.9L758.2 668.0L759.1 658.3L760.0 668.0L760.8 661.8L761.9 678.1L762.8 650.5L763.9 657.8L765.0 660.1L766.1 650.6L767.0 654.6L768.2 686.6L769.3 666.8L770.3 667.2L771.4 669.2L772.6 658.1L773.5 671.3L774.5 660.1L775.7 645.4L776.9 666.4L777.8 660.0L778.9 663.2L779.8 664.3L780.8 665.4L781.7 663.3L782.7 660.9L783.7 662.0L784.8 674.9L785.7 656.8L786.9 662.4L788.1 654.1L789.1 691.1L789.9 675.3L790.8 657.8L791.7 655.8L792.7 676.3L793.9 653.5L794.9 667.8L795.9 663.4L796.7 669.2L797.8 670.5L799.0 666.3L799.8 676.1L800.7 658.8L801.7 667.8L802.6 672.3L803.4 650.2L804.2 655.7L805.3 654.9L806.2 670.6L807.3 658.0L808.4 659.8L809.3 662.9L810.5 668.1L811.5 669.4L812.6 663.1L813.8 658.9L814.6 651.6L815.7 664.8L816.7 661.3L817.7 659.4L818.6 661.9L819.7 664.9L820.8 687.3L821.6 663.7L822.5 695.0L823.5 654.9L824.7 653.0L825.8 661.0L827.0 653.9L828.0 653.4L828.8 655.6L830.0 662.1L830.9 657.1L832.1 655.2L833.2 659.5L834.1 666.9L835.1 656.1L836.0 668.7L837.0 671.4L837.9 669.0L839.0 666.4L840.1 646.8L841.0 673.1L842.2 660.8L843.3 661.6L844.2 667.8L845.3 660.2L846.4 659.1L847.5 655.5L848.4 656.9L849.4 645.0L850.5 668.2L851.6 658.1L852.6 662.9L853.6 664.5L854.5 662.7L855.5 667.2L856.6 670.8L857.7 660.6L858.8 666.6L859.8 660.7L860.9 668.9L861.8 670.9L862.8 668.4L863.8 680.3L864.9 658.0L865.8 654.7L866.8 649.9L867.8 659.0L868.8 657.5L869.8 643.7L870.7 659.6L871.8 663.5L872.6 663.3L873.6 663.7L874.7 661.9L875.6 653.1L876.8 653.4L877.6 660.7L878.7 689.9L879.9 654.7L881.0 677.5L881.9 669.3L882.7 662.4L883.8 670.0L884.9 663.0L885.8 657.2L886.6 663.7L887.5 655.2L888.7 664.0L889.6 659.8L890.7 669.3L891.6 644.9L892.7 656.5L893.9 668.1L895.0 660.2L895.8 658.8L897.0 664.0L897.9 665.6L898.9 664.3L899.8 676.0L900.7 681.5L901.9 655.9L903.0 662.5L903.9 673.7L904.8 666.2L905.8 658.4L907.0 660.3L908.2 668.0L909.1 660.7L910.1 654.7L911.1 668.2L912.1 652.4L913.0 672.2L913.9 659.1L915.1 675.7L916.2 683.1L917.3 664.5L918.5 686.2L919.4 672.9L920.3 650.3L921.1 655.9L922.2 673.2L923.1 668.1L924.1 668.4L925.1 671.2L926.1 663.3L926.9 653.2L927.8 654.7L928.6 649.2L929.8 658.6L930.8 666.9L931.8 668.3L932.6 672.5L933.8 648.8L934.8 648.7L935.8 653.7L936.7 673.3L937.5 672.2L938.7 649.5L939.9 681.3L940.9 678.2L942.0 658.5L943.1 676.4L944.2 666.5L945.3 657.4L946.4 661.1L947.3 665.1L948.4 666.2L949.3 662.4L950.4 654.4L951.5 674.8L952.6 662.4L953.5 658.1L954.3 670.5L955.5 653.8L956.3 682.5L957.4 667.1L958.6 651.9L959.7 648.8L960.7 675.7L961.7 650.8L962.9 679.8L964.0 655.4L965.2 664.5L966.1 682.9L967.0 662.1L968.1 657.9L969.3 662.0L970.1 672.2L971.2 658.9L972.2 662.8L973.1 663.8L974.1 672.7L975.2 661.4L976.1 660.8L977.1 663.3L978.2 663.4L979.3 666.0L980.5 684.5L981.4 667.6L982.3 674.5L983.4 663.2L984.5 652.5L985.5 679.9L986.4 668.9L987.4 680.6L988.5 669.3L989.5 673.8L990.6 665.2L991.7 669.4L992.6 662.6L993.5 668.5L994.7 685.5L995.6 670.6L996.6 675.5L997.7 669.7L998.5 662.5L999.3 673.2L1000.3 654.1L1001.4 667.8L1002.6 662.9L1003.6 667.0L1004.5 652.6L1005.5 672.2L1006.6 662.9L1007.8 678.6L1008.9 659.3L1009.9 667.0L1011.0 655.4L1012.0 653.2L1013.1 645.0L1014.2 672.6L1015.1 663.2L1016.3 656.7L1017.2 665.4L1018.3 661.5L1019.1 658.3L1020.1 668.9L1021.3 660.3L1022.5 657.6L1023.6 651.6L1024.7 654.0L1025.8 664.5L1026.7 667.9L1027.7 674.8L1028.7 679.1L1029.5 656.0L1030.7 656.9L1031.5 662.1L1032.6 655.7L1033.7 663.9L1034.7 659.4L1035.6 650.3L1036.8 667.0L1037.7 666.2L1038.8 659.1L1039.6 678.3L1040.5 676.4L1041.3 668.2L1042.3 669.4L1043.5 654.5L1044.6 662.4L1045.4 669.7L1046.3 670.2L1047.3 659.9L1048.4 656.8L1049.2 675.5L1050.1 669.8L1051.2 661.4L1052.2 690.3L1053.2 661.9L1054.3 662.3L1055.2 660.3L1056.0 659.6L1056.9 670.0L1057.9 660.1L1059.0 653.1L1059.9 664.9L1060.9 675.4L1061.7 677.0L1062.5 668.1L1063.6 659.2L1064.8 661.3L1065.9 669.3L1066.8 672.6L1067.8 673.3L1068.9 662.2L1070.1 671.9L1071.0 681.6L1071.9 664.7L1072.8 668.8L1073.9 673.9L1074.9 657.8L1076.0 683.8L1077.0 669.6L1077.9 665.1L1079.1 675.3L1080.1 666.4L1081.1 659.4L1082.0 671.3L1082.9 668.5L1083.9 660.1L1084.9 675.1L1086.0 658.5L1087.1 664.7L1088.0 674.9L1089.2 679.4L1090.0 667.1L1091.1 659.0L1092.1 668.1L1093.1 658.9L1094.2 671.0L1095.1 682.7L1096.3 665.9L1097.4 668.2L1098.6 656.8L1099.4 676.4L1100.3 646.0L1101.1 679.6L1102.3 662.0L1103.1 665.2L1104.0 654.4L1104.8 660.0L1105.9 676.1L1106.8 665.1L1107.9 670.3L1108.9 663.0L1109.8 664.3L1110.7 663.3L1111.6 665.9L1112.8 661.8L1113.9 661.8L1115.0 667.5L1115.8 666.8L1116.7 658.0L1117.6 675.6L1118.4 663.8L1119.6 665.7L1120.6 662.2L1121.7 670.1L1122.7 664.4L1123.8 663.1L1124.8 690.5L1125.7 652.9L1126.7 659.4L1127.9 658.6L1128.9 679.3L1130.0 667.8L1131.2 661.3L1132.3 667.5L1133.2 658.7L1134.2 680.4L1135.1 678.8L1136.2 665.8L1137.1 653.4L1137.9 660.7L1138.9 652.6L1139.7 669.8L1140.8 665.4L1141.8 681.1L1142.8 667.9L1143.8 649.5L1144.7 664.6L1145.7 657.8L1146.7 688.1L1147.7 702.6L1148.5 674.5L1149.3 674.6L1150.4 660.4L1151.4 668.0L1152.6 665.6L1153.7 656.7L1154.7 665.7L1155.5 673.9L1156.7 665.4L1157.8 662.0L1158.8 660.2L1160.0 665.9L1160.9 667.8L1161.9 659.7L1162.9 664.4L1164.0 664.9L1165.2 670.2L1166.2 667.4L1167.2 687.0L1168.1 682.0L1169.1 665.9L1170.2 660.2L1171.2 668.6L1172.2 664.1L1173.1 668.1L1174.1 654.0L1175.1 670.2L1176.3 666.5L1177.3 654.8L1178.4 672.7L1179.5 664.0L1180.6 659.6L1181.6 669.4L1182.6 669.1L1183.8 705.2L1184.9 658.7L1185.8 674.2L1186.8 675.0L1187.8 671.3L1188.6 659.9L1189.6 676.3L1190.5 668.2L1191.6 654.4L1192.6 651.0L1193.7 663.2L1194.7 668.3L1195.8 664.9L1196.9 657.7L1197.8 662.7L1198.8 676.5L1199.7 661.9L1200.8 654.7L1201.8 661.7L1202.9 661.0L1203.8 668.0L1204.8 695.7L1205.9 660.9" stroke="#4a6ae0" stroke-width="1.4" fill="none" stroke-linejoin="round"/>
<path d="M239.4 465.9L241.0 467.2L242.5 480.8L243.7 535.1L245.0 518.8L246.5 485.2L248.0 496.1L249.4 489.8L251.0 486.6L252.5 483.2L254.2 500.3L255.9 517.4L257.1 542.7L258.3 538.7L259.5 485.2L261.1 506.0L262.5 520.3L263.8 511.0L265.5 507.5L266.8 526.9L268.4 533.7L269.8 540.9L271.0 565.0L272.7 567.4L273.9 554.2L275.3 543.3L276.5 563.4L277.9 540.0L279.4 550.4L280.6 576.1L281.8 546.2L283.3 564.2L284.3 544.5L285.5 529.1L286.9 555.6L288.0 553.3L289.4 544.0L290.9 556.2L292.0 540.1L293.5 561.2L294.8 552.8L295.8 569.4L297.1 560.3L298.1 560.6L299.1 555.0L300.6 581.4L302.1 567.7L303.5 596.8L304.6 560.0L305.7 577.4L306.8 581.8L307.8 562.3L309.2 569.2L310.2 567.7L311.5 622.4L312.8 584.6L314.2 574.1L315.2 578.9L316.4 607.0L317.7 585.6L318.9 576.3L320.2 599.4L321.4 581.8L322.7 598.5L324.0 579.8L325.2 597.7L326.3 614.1L327.4 596.8L328.5 576.9L329.6 591.8L330.8 584.2L331.8 589.4L333.1 593.8L334.4 590.9L335.3 579.2L336.4 586.7L337.3 605.1L338.4 600.6L339.6 597.1L340.8 611.5L342.0 581.6L343.1 599.0L344.1 590.7L345.2 595.7L346.1 592.2L347.2 596.1L348.4 581.0L349.4 601.9L350.6 617.2L351.7 597.6L352.8 599.7L353.9 592.9L355.1 590.5L356.0 616.7L357.0 586.8L358.0 598.2L359.3 583.1L360.2 590.1L361.1 601.7L362.2 600.3L363.3 589.3L364.5 599.8L365.6 598.3L366.5 590.9L367.4 597.0L368.3 590.9L369.3 617.7L370.5 602.6L371.7 596.1L372.6 598.3L373.8 603.5L374.9 602.3L376.0 585.2L377.1 609.7L378.1 600.8L379.0 592.0L380.3 591.9L381.3 590.9L382.2 598.1L383.4 589.7L384.4 605.1L385.3 594.4L386.4 596.8L387.2 607.8L388.3 612.1L389.2 616.9L390.3 604.6L391.5 598.4L392.7 588.1L393.5 603.0L394.5 600.2L395.5 603.0L396.6 602.2L397.6 597.7L398.6 605.9L399.6 610.8L400.5 597.4L401.5 596.6L402.7 600.4L403.7 600.3L404.6 604.5L405.7 621.4L406.7 644.1L407.6 634.3L408.8 625.0L409.8 626.3L411.0 616.4L412.1 630.9L413.1 637.2L414.1 626.6L415.0 620.7L415.9 609.7L417.0 626.4L418.1 630.6L419.2 617.7L420.2 640.8L421.3 632.1L422.1 617.6L423.0 622.5L424.1 631.0L425.2 625.4L426.0 630.4L426.9 620.5L427.9 622.2L429.0 626.6L430.1 639.7L431.3 633.3L432.1 643.6L432.9 637.9L433.9 624.6L434.9 643.5L435.9 631.4L436.8 628.5L437.9 637.6L438.8 627.8L439.8 651.0L440.8 628.6L441.9 630.8L442.8 628.7L443.7 635.2L444.6 631.3L445.4 641.6L446.3 638.8L447.1 635.6L448.0 627.1L449.1 637.1L450.2 620.0L451.1 631.0L452.1 634.2L452.9 652.2L454.0 636.3L454.8 628.4L455.8 647.6L456.7 632.5L457.6 633.9L458.6 642.2L459.6 633.2L460.7 647.7L461.5 646.4L462.6 643.2L463.4 649.4L464.4 636.4L465.4 633.3L466.3 644.0L467.3 628.2L468.4 632.4L469.5 643.0L470.6 630.8L471.6 620.7L472.4 635.9L473.1 636.4L474.0 625.1L474.7 643.4L475.8 631.0L476.9 641.1L477.9 637.7L478.7 632.5L479.7 642.7L480.5 643.1L481.3 651.7L482.3 631.9L483.4 637.2L484.1 635.3L485.2 629.8L486.3 626.4L487.4 636.4L488.3 635.6L489.2 621.1L490.0 664.5L490.9 643.8L491.6 632.9L492.7 630.7L493.5 638.5L494.3 634.4L495.1 635.7L496.0 654.7L497.1 632.4L497.9 639.1L498.9 629.3L499.6 630.4L500.5 637.5L501.6 629.2L502.5 641.2L503.4 633.3L504.4 637.3L505.5 649.9L506.5 637.3L507.2 636.1L508.3 640.7L509.0 630.3L509.7 640.4L510.5 641.8L511.6 634.0L512.5 641.8L513.5 632.3L514.5 650.4L515.4 630.5L516.1 641.3L517.1 633.0L517.9 623.1L519.0 645.7L519.9 650.9L520.7 627.2L521.6 642.4L522.4 632.3L523.4 633.4L524.4 628.3L525.2 633.3L526.2 639.9L527.0 652.1L527.9 632.2L528.8 633.8L529.9 644.1L530.8 639.8L531.5 633.7L532.5 634.7L533.5 649.6L534.4 658.9L535.3 641.8L536.1 632.6L537.2 635.7L538.1 633.7L539.2 641.1L540.0 643.9L540.8 629.6L541.7 643.0L542.6 626.8L543.7 630.3L544.7 644.2L545.7 656.4L546.7 644.3L547.7 636.0L548.5 648.6L549.4 635.5L550.5 646.8L551.5 640.5L552.4 670.6L553.3 635.1L554.3 637.9L555.1 647.0L555.9 637.8L557.0 636.2L557.7 637.9L558.6 640.6L559.7 644.7L560.4 641.7L561.3 640.3L562.1 627.8L563.0 630.6L563.8 639.1L564.5 640.0L565.5 626.5L566.4 630.3L567.2 634.2L568.3 631.6L569.2 647.5L570.0 640.7L570.9 629.0L571.9 630.1L572.9 631.8L573.6 642.6L574.4 643.3L575.3 654.3L576.1 644.5L576.8 633.0L577.9 641.4L578.6 634.9L579.6 633.0L580.4 647.9L581.5 634.9L582.4 631.6L583.2 656.3L584.1 644.9L585.0 642.9L585.7 644.4L586.6 630.0L587.4 655.1L588.3 643.1L589.0 639.8L589.8 648.0L590.8 638.5L591.5 622.1L592.3 635.6L593.2 646.9L594.0 627.5L594.7 649.2L595.5 644.9L596.3 638.2L597.3 633.1L598.1 634.0L599.0 630.4L599.9 635.9L600.6 640.8L601.4 640.9L602.4 622.2L603.3 634.4L604.2 636.0L605.0 631.0L606.0 630.1L606.9 635.6L607.9 633.9L608.8 642.0L609.8 635.4L610.8 622.5L611.7 632.0L612.7 652.4L613.7 624.6L614.6 622.7L615.5 638.8L616.2 646.0L617.0 639.1L617.9 641.5L618.7 640.5L619.6 639.5L620.3 639.3L621.3 643.6L622.2 625.7L622.9 630.2L623.9 637.8L624.7 646.0L625.8 627.9L626.6 627.4L627.7 645.8L628.5 632.5L629.2 651.2L630.1 635.0L631.1 630.8L632.0 654.0L632.9 622.9L633.7 640.3L634.6 635.1L635.4 650.4L636.3 636.5L637.0 632.4L638.0 636.9L638.8 634.2L639.7 632.3L640.5 632.5L641.4 633.1L642.2 630.6L643.2 634.2L643.9 621.2L644.6 629.5L645.6 626.7L646.5 624.2L647.3 639.4L648.1 656.3L648.9 633.9L649.7 623.2L650.6 631.1L651.5 633.2L652.3 640.6L653.2 636.6L654.0 630.2L654.9 640.8L655.6 630.7L656.6 641.6L657.3 621.4L658.3 624.6L659.3 647.1L660.2 639.0L661.0 654.4L661.9 647.6L662.9 634.8L664.0 630.8L664.9 626.7L665.8 648.4L666.7 639.7L667.5 635.0L668.5 639.4L669.2 656.1L670.0 628.4L670.7 630.7L671.5 633.7L672.3 633.9L673.1 651.8L674.1 626.8L674.9 616.0L675.9 627.9L676.7 639.2L677.5 637.4L678.2 630.5L679.0 637.5L679.9 642.8L680.6 643.9L681.6 635.6L682.4 632.3L683.2 637.2L684.2 638.8L685.2 633.5L686.2 646.3L686.9 648.5L687.8 630.9L688.5 630.4L689.4 628.9L690.1 629.9L691.0 627.4L691.7 627.8L692.7 632.7L693.7 632.0L694.5 644.2L695.4 637.8L696.3 646.9L697.3 635.6L698.2 621.6L699.1 630.9L700.0 638.1L701.0 634.9L701.8 624.7L702.6 651.3L703.5 633.8L704.5 634.4L705.3 648.9L706.3 640.0L707.1 635.1L707.8 640.6L708.5 643.1L709.4 639.8L710.4 625.6L711.3 629.8L712.0 631.1L712.9 639.4L713.9 641.6L714.8 639.5L715.7 631.7L716.4 634.3L717.4 637.8L718.3 645.8L719.3 627.9L720.1 637.5L720.9 656.8L721.8 638.5L722.8 649.8L723.6 635.0L724.5 619.0L725.4 658.5L726.3 626.7L727.3 614.2L728.3 631.8L729.3 651.7L730.1 640.7L731.0 644.5L731.7 636.8L732.8 640.3L733.7 635.1L734.6 641.0L735.6 637.8L736.3 633.6L737.1 633.6L737.8 650.9L738.7 623.0L739.6 634.9L740.4 629.3L741.2 629.6L742.1 644.6L742.9 630.2L743.7 633.6L744.4 636.4L745.3 637.4L746.4 630.2L747.4 634.4L748.3 631.6L749.3 621.9L750.1 637.5L750.8 632.8L751.6 639.6L752.5 640.4L753.2 638.4L754.0 617.6L755.0 631.9L756.0 636.8L757.0 637.7L757.7 632.3L758.7 639.1L759.5 644.9L760.2 633.4L761.0 641.3L761.7 616.0L762.5 631.9L763.5 629.5L764.4 646.7L765.2 649.2L765.9 640.3L766.7 629.4L767.5 643.3L768.2 630.6L768.9 628.9L769.7 642.7L770.4 640.3L771.3 631.7L772.3 631.8L773.1 647.7L773.8 633.8L774.5 638.3L775.5 642.2L776.5 624.3L777.4 644.6L778.2 631.5L779.1 628.1L779.9 626.7L780.9 634.9L781.6 652.8L782.3 642.2L783.0 624.8L784.0 645.1L784.7 632.6L785.6 659.9L786.5 627.8L787.3 647.9L788.1 629.0L789.1 649.2L790.0 633.7L790.9 637.0L791.7 638.0L792.7 633.8L793.7 656.6L794.5 635.9L795.2 646.4L796.2 630.3L797.0 628.0L797.8 634.3L798.6 643.4L799.5 637.6L800.5 643.2L801.4 648.5L802.3 635.8L803.0 636.4L803.8 642.5L804.7 635.4L805.5 654.5L806.5 641.8L807.3 652.4L808.0 637.4L809.0 632.7L809.7 641.3L810.6 637.3L811.3 630.9L812.2 642.2L813.1 656.0L813.9 639.4L814.7 660.5L815.4 637.9L816.4 645.3L817.3 637.5L818.0 623.8L818.8 635.1L819.7 636.2L820.4 634.0L821.2 632.1L822.0 621.3L822.7 638.8L823.4 635.2L824.3 647.0L825.2 643.4L826.0 642.4L826.8 639.6L827.7 648.5L828.4 638.1L829.2 656.4L830.2 632.9L831.1 630.2L831.8 660.1L832.6 637.5L833.5 647.1L834.2 650.1L835.2 638.4L836.1 627.6L836.9 626.7L837.6 652.9L838.5 626.8L839.5 639.6L840.2 626.3L841.2 628.1L842.0 646.5L843.0 626.0L843.7 642.6L844.6 643.4L845.6 633.5L846.4 642.3L847.3 639.3L848.2 642.0L848.9 631.4L849.8 639.4L850.5 645.1L851.4 623.9L852.2 637.5L853.1 645.0L854.0 628.4L854.9 651.2L855.8 649.5L856.6 649.9L857.4 649.1L858.4 640.3L859.3 639.3L860.1 640.9L860.9 630.8L861.6 637.6L862.5 622.0L863.4 629.9L864.2 647.8L865.1 643.7L866.1 630.0L866.9 627.9L867.9 630.9L868.9 633.6L869.6 644.4L870.4 620.3L871.1 633.1L872.1 647.4L873.0 627.7L873.9 638.1L874.8 641.8L875.8 642.2L876.8 637.6L877.7 634.9L878.5 653.0L879.4 636.0L880.2 627.1L881.1 634.8L881.8 632.0L882.6 621.8L883.3 635.2L884.2 629.8L885.2 631.9L886.0 639.5L886.7 631.5L887.5 627.4L888.4 645.0L889.3 626.3L890.2 625.6L891.0 630.2L891.8 633.1L892.7 646.5L893.7 649.8L894.6 617.3L895.3 636.5L896.1 640.4L897.1 625.3L897.8 643.5L898.9 629.9L899.8 625.8L900.9 650.3L901.7 626.1L902.7 648.7L903.4 639.5L904.1 635.2L904.9 644.8L905.9 646.8L906.6 634.0L907.4 652.6L908.2 639.4L909.2 632.3L910.1 629.8L911.0 640.6L911.8 630.3L912.6 640.7L913.5 641.4L914.4 636.9L915.3 624.7L916.1 634.7L916.9 630.6L917.7 632.4L918.5 632.9L919.4 625.3L920.2 646.1L921.1 631.2L921.9 643.6L922.9 640.9L923.7 646.0L924.7 630.4L925.5 646.1L926.3 656.9L927.2 628.1L928.0 670.2L929.0 643.9L930.0 632.7L930.7 659.3L931.6 644.5L932.4 637.1L933.4 635.3L934.1 626.3L935.0 632.8L935.9 634.8L936.8 635.7L937.7 647.5L938.7 629.7L939.4 626.9L940.1 634.6L941.0 644.6L941.7 628.2L942.7 642.4L943.5 636.3L944.2 646.0L945.2 634.4L946.3 639.3L947.1 637.5L948.1 638.5L949.0 648.8L950.0 639.2L950.7 629.0L951.6 628.4L952.4 648.2L953.3 643.5L954.2 628.9L955.1 649.5L956.0 634.4L957.0 633.1L957.7 639.1L958.4 641.0L959.2 642.9L960.2 644.0L960.9 639.6L961.8 626.5L962.7 638.1L963.5 640.0L964.2 637.8L965.1 632.9L965.8 632.2L966.6 638.4L967.6 652.7L968.3 628.4L969.2 638.3L970.2 647.9L971.0 646.1L971.9 642.7L972.7 626.2L973.6 644.0L974.4 651.4L975.2 630.6L976.0 642.4L976.8 638.1L977.6 629.1L978.4 645.1L979.4 628.7L980.3 635.3L981.3 634.6L982.1 638.4L982.9 650.6L983.6 650.9L984.6 623.4L985.5 639.9L986.4 654.1L987.4 628.3L988.1 629.5L989.0 642.7L990.1 631.6L990.8 632.9L991.6 621.4L992.6 646.7L993.4 645.5L994.5 655.3L995.2 645.3L996.2 649.3L997.2 648.6L997.9 643.4L998.8 619.9L999.5 638.6L1000.4 631.2L1001.3 637.2L1002.1 634.7L1002.9 619.9L1003.6 638.7L1004.6 636.8L1005.5 644.0L1006.3 646.7L1007.3 627.3L1008.1 625.2L1009.0 635.7L1010.0 644.6L1011.0 642.6L1011.8 622.2L1012.5 655.3L1013.3 653.3L1014.2 621.4L1015.1 639.0L1015.8 630.6L1016.7 637.6L1017.6 625.6L1018.5 628.7L1019.5 654.6L1020.4 652.4L1021.4 631.8L1022.1 627.7L1022.8 644.3L1023.7 622.0L1024.5 649.4L1025.2 635.3L1026.0 629.9L1027.1 624.7L1027.8 652.7L1028.6 624.9L1029.3 625.1L1030.0 639.6L1030.8 639.4L1031.7 637.3L1032.5 636.0L1033.3 628.4L1034.3 643.7L1035.2 632.4L1036.0 635.5L1036.6 661.3L1037.6 644.3L1038.3 628.8L1039.3 636.7L1040.1 636.4L1040.9 632.0L1041.8 640.0L1042.6 631.3L1043.5 642.5L1044.5 644.1L1045.5 619.3L1046.4 637.4L1047.4 651.4L1048.4 643.3L1049.3 635.1L1050.1 637.0L1050.9 625.5L1051.6 637.5L1052.6 644.4L1053.4 627.3L1054.2 629.8L1055.1 624.8L1055.8 633.9L1056.8 631.5L1057.7 635.6L1058.5 656.2L1059.4 647.2L1060.1 641.4L1060.9 657.3L1061.9 640.3L1062.8 652.4L1063.5 626.8L1064.4 634.4L1065.4 663.5L1066.3 642.0L1067.1 660.8L1068.1 634.1L1069.0 623.5L1069.8 651.6L1070.7 624.5L1071.5 632.2L1072.5 634.8L1073.4 628.6L1074.4 634.5L1075.3 627.6L1076.2 640.7L1077.1 634.4L1077.8 639.6L1078.5 629.5L1079.4 637.7L1080.3 638.7L1081.1 636.8L1081.8 622.4L1082.8 622.1L1083.5 627.8L1084.3 631.0L1085.1 646.2L1086.1 636.3L1087.0 629.5L1087.8 636.8L1088.7 633.8L1089.3 633.7L1090.2 638.9L1091.2 639.6L1091.9 632.7L1092.7 642.4L1093.5 644.9L1094.4 627.9L1095.2 632.7L1096.1 634.0L1096.9 623.7L1097.6 638.2L1098.5 641.9L1099.2 645.3L1099.9 634.4L1100.6 633.6L1101.4 634.8L1102.3 639.5L1103.3 636.4L1104.2 629.0L1105.1 631.7L1105.9 636.1L1106.9 632.1L1107.6 644.1L1108.6 630.1L1109.5 627.5L1110.2 631.1L1111.0 627.8L1111.9 653.7L1112.6 619.2L1113.4 636.2L1114.2 647.9L1115.1 638.9L1116.1 623.3L1116.8 647.9L1117.8 638.7L1118.6 625.3L1119.5 651.2L1120.5 638.1L1121.3 648.0L1122.1 643.4L1123.1 644.2L1124.0 641.6L1124.9 635.1L1125.9 625.4L1126.8 650.1L1127.8 642.6L1128.5 634.6L1129.5 640.6L1130.4 625.3L1131.2 620.5L1131.9 639.5L1132.8 648.4L1133.6 636.4L1134.6 630.6L1135.6 638.4L1136.5 632.7L1137.4 635.0L1138.4 636.9L1139.2 633.4L1140.2 615.6L1141.2 639.6L1142.1 641.4L1143.0 633.8L1143.8 632.1L1144.6 643.0L1145.4 628.2L1146.4 646.4L1147.4 642.1L1148.2 625.2L1149.0 640.1L1149.7 624.7L1150.6 640.4L1151.3 640.6L1152.0 625.1L1152.8 647.0L1153.7 633.5L1154.4 631.0L1155.4 651.9L1156.3 630.6L1157.3 635.4L1158.2 634.2L1159.0 635.0L1159.7 635.6L1160.4 636.0L1161.4 628.5L1162.1 646.5L1163.0 649.6L1164.0 648.8L1164.8 642.7L1165.7 626.8L1166.4 628.6L1167.1 635.9L1168.1 627.9L1169.1 633.4L1169.9 625.8L1170.7 636.1L1171.5 635.6L1172.2 636.4L1173.1 633.3L1173.8 626.0L1174.6 640.9L1175.4 637.6L1176.4 644.4L1177.4 623.7L1178.3 649.0L1179.2 644.3L1180.1 631.0L1181.1 638.9L1181.8 627.5L1182.7 635.0L1183.6 641.6L1184.5 634.1L1185.4 635.6L1186.4 634.3L1187.3 626.3L1188.1 632.9L1189.0 637.3L1189.9 636.9L1190.6 637.9L1191.4 646.7L1192.1 635.6L1193.1 632.6L1193.9 640.5L1194.9 647.6L1195.6 621.6L1196.5 635.5L1197.4 640.8L1198.1 642.2L1199.1 641.2L1199.9 636.9L1200.8 641.8L1201.8 630.6L1202.8 639.1L1203.7 617.3L1204.7 637.9L1205.5 636.3" stroke="#e0185c" stroke-width="2.1" fill="none" stroke-linejoin="round"/>
<path d="M234.8 665V323" stroke="#9c3068" stroke-width="2.8" fill="none"/><path d="M236 323L238 420 L239.5 520 L241.5 470" stroke="#d81860" stroke-width="1.8" fill="none"/>
<path d="M237 352L338 460" stroke="#16165a" stroke-width="1"/>
<defs><radialGradient id="gr" cx="0.5" cy="0.3" r="0.7"><stop offset="0" stop-color="#ffb0b0"/><stop offset="0.45" stop-color="#ee2020"/><stop offset="1" stop-color="#a00000"/></radialGradient><radialGradient id="gb" cx="0.5" cy="0.3" r="0.7"><stop offset="0" stop-color="#b0c0ff"/><stop offset="0.45" stop-color="#2040f0"/><stop offset="1" stop-color="#0010a0"/></radialGradient><radialGradient id="gg" cx="0.5" cy="0.3" r="0.7"><stop offset="0" stop-color="#b0ffb0"/><stop offset="0.45" stop-color="#20b020"/><stop offset="1" stop-color="#006000"/></radialGradient></defs>
<clipPath id="pc"><rect x="233.5" y="233" width="973" height="546"/></clipPath><g clip-path="url(#pc)">
<circle cx="237" cy="323" r="5.6" fill="url(#gr)"/>
<ellipse cx="237" cy="320.4" rx="3.6" ry="1.9" fill="#fff" fill-opacity="0.55"/>
<circle cx="237" cy="351" r="5.6" fill="url(#gb)"/>
<ellipse cx="237" cy="348.4" rx="3.6" ry="1.9" fill="#fff" fill-opacity="0.55"/>
<circle cx="240" cy="378.5" r="5.6" fill="url(#gr)"/>
<ellipse cx="240" cy="375.9" rx="3.6" ry="1.9" fill="#fff" fill-opacity="0.55"/>
<circle cx="338.5" cy="460.5" r="5.6" fill="url(#gb)"/>
<ellipse cx="338.5" cy="457.9" rx="3.6" ry="1.9" fill="#fff" fill-opacity="0.55"/>
<circle cx="418" cy="679" r="5.6" fill="url(#gg)"/>
<ellipse cx="418" cy="676.4" rx="3.6" ry="1.9" fill="#fff" fill-opacity="0.55"/>
</g>
</svg>
<div class="t" style="left:243.5px;top:316.5px;font-size:12px;color:#f0f0f0">Ld</div>
<div class="t" style="left:243.5px;top:344.5px;font-size:12px;color:#f0f0f0">Lr1</div>
<div class="t" style="left:248px;top:372.0px;font-size:12px;color:#f0f0f0">Le</div>
<div class="t" style="left:346.5px;top:454.0px;font-size:12px;color:#f0f0f0">Lr2</div>
<div class="t" style="left:426px;top:672.5px;font-size:12px;color:#f0f0f0">Ln</div>
<div class="t" style="left:244px;top:238px;font-size:12px;font-weight:bold;color:#fff">Log<i style="display:inline-block;vertical-align:top;margin-top:1px;margin-left:1px;width:0;height:0;border-left:5px solid transparent;border-right:5px solid transparent;border-top:10px solid #fff"></i></div>
<div class="t" style="left:1148px;top:239px;font-size:12px;font-weight:bold;color:#fff">TF 3<i style="display:inline-block;vertical-align:top;margin-top:1px;margin-left:1px;width:0;height:0;border-left:5px solid transparent;border-right:5px solid transparent;border-top:10px solid #fff"></i></div>
<div class="t" style="right:1188px;top:292.5px;font-size:10.5px;color:#e8e8e8">-12</div>
<div class="t" style="right:1188px;top:358.0px;font-size:10.5px;color:#e8e8e8">-24</div>
<div class="t" style="right:1188px;top:423.6px;font-size:10.5px;color:#e8e8e8">-36</div>
<div class="t" style="right:1188px;top:489.2px;font-size:10.5px;color:#e8e8e8">-48</div>
<div class="t" style="right:1188px;top:554.7px;font-size:10.5px;color:#e8e8e8">-60</div>
<div class="t" style="right:1188px;top:620.3px;font-size:10.5px;color:#e8e8e8">-72</div>
<div class="t" style="right:1188px;top:685.9px;font-size:10.5px;color:#e8e8e8">-84</div>
<div class="t" style="right:1188px;top:751.4px;font-size:10.5px;color:#e8e8e8">-96</div>
<div class="t" style="left:147px;width:100px;text-align:center;top:500px;height:12px;font-size:11px;color:#e8e8e8;transform:rotate(-90deg);transform-origin:50px 6px;">Level (dB)</div>
<div class="t" style="right:386.5px;top:254.5px;font-size:11px;color:#e4e4e4">D/R:</div>
<div class="t" style="right:316.5px;top:254.5px;font-size:11px;color:#e4e4e4">9.55 dB</div>
<div class="t" style="right:386.5px;top:270.4px;font-size:11px;color:#e4e4e4">EDT:</div>
<div class="t" style="right:316.5px;top:270.4px;font-size:11px;color:#e4e4e4">0.033 sec</div>
<div class="t" style="right:386.5px;top:286.2px;font-size:11px;color:#e4e4e4">RT60:</div>
<div class="t" style="right:316.5px;top:286.2px;font-size:11px;color:#e4e4e4">0.272 sec</div>
<div class="t" style="right:233px;top:286.2px;font-size:11px;color:#e4e4e4">-220.9 dB/sec</div>
<div class="t" style="right:386.5px;top:302.1px;font-size:11px;color:#e4e4e4">Ld-Le:</div>
<div class="t" style="right:316.5px;top:302.1px;font-size:11px;color:#e4e4e4">3.3 ms</div>
<div class="t" style="right:233px;top:302.1px;font-size:11px;color:#e4e4e4">-10.01 dB</div>
<div class="t" style="right:386.5px;top:317.9px;font-size:11px;color:#e4e4e4">Ld-Ln:</div>
<div class="t" style="right:316.5px;top:317.9px;font-size:11px;color:#e4e4e4">128.0 ms</div>
<div class="t" style="right:233px;top:317.9px;font-size:11px;color:#e4e4e4">-65.00 dB</div>
<div class="t" style="right:386.5px;top:333.8px;font-size:11px;color:#e4e4e4">Lr1-Lr2:</div>
<div class="t" style="right:316.5px;top:333.8px;font-size:11px;color:#e4e4e4">72.3 ms</div>
<div class="t" style="right:233px;top:333.8px;font-size:11px;color:#e4e4e4">-19.99 dB</div>
<div class="t" style="left:219.4px;width:40px;text-align:center;top:784.0px;font-size:10.5px;color:#e8e8e8">5</div>
<div class="t" style="left:248.0px;width:40px;text-align:center;top:784.0px;font-size:10.5px;color:#e8e8e8">25</div>
<div class="t" style="left:276.5px;width:40px;text-align:center;top:784.0px;font-size:10.5px;color:#e8e8e8">45</div>
<div class="t" style="left:305.1px;width:40px;text-align:center;top:784.0px;font-size:10.5px;color:#e8e8e8">65</div>
<div class="t" style="left:333.6px;width:40px;text-align:center;top:784.0px;font-size:10.5px;color:#e8e8e8">85</div>
<div class="t" style="left:362.2px;width:40px;text-align:center;top:784.0px;font-size:10.5px;color:#e8e8e8">105</div>
<div class="t" style="left:390.7px;width:40px;text-align:center;top:784.0px;font-size:10.5px;color:#e8e8e8">125</div>
<div class="t" style="left:419.3px;width:40px;text-align:center;top:784.0px;font-size:10.5px;color:#e8e8e8">145</div>
<div class="t" style="left:447.8px;width:40px;text-align:center;top:784.0px;font-size:10.5px;color:#e8e8e8">165</div>
<div class="t" style="left:476.4px;width:40px;text-align:center;top:784.0px;font-size:10.5px;color:#e8e8e8">185</div>
<div class="t" style="left:504.9px;width:40px;text-align:center;top:784.0px;font-size:10.5px;color:#e8e8e8">205</div>
<div class="t" style="left:533.5px;width:40px;text-align:center;top:784.0px;font-size:10.5px;color:#e8e8e8">225</div>
<div class="t" style="left:562.0px;width:40px;text-align:center;top:784.0px;font-size:10.5px;color:#e8e8e8">245</div>
<div class="t" style="left:583.5px;width:40px;text-align:center;top:784.0px;font-size:10.5px;color:#e8e8e8">260</div>
<div class="t" style="left:612.0px;width:40px;text-align:center;top:784.0px;font-size:10.5px;color:#e8e8e8">280</div>
<div class="t" style="left:640.5px;width:40px;text-align:center;top:784.0px;font-size:10.5px;color:#e8e8e8">300</div>
<div class="t" style="left:669.1px;width:40px;text-align:center;top:784.0px;font-size:10.5px;color:#e8e8e8">320</div>
<div class="t" style="left:697.7px;width:40px;text-align:center;top:784.0px;font-size:10.5px;color:#e8e8e8">340</div>
<div class="t" style="left:726.2px;width:40px;text-align:center;top:784.0px;font-size:10.5px;color:#e8e8e8">360</div>
<div class="t" style="left:754.8px;width:40px;text-align:center;top:784.0px;font-size:10.5px;color:#e8e8e8">380</div>
<div class="t" style="left:783.3px;width:40px;text-align:center;top:784.0px;font-size:10.5px;color:#e8e8e8">400</div>
<div class="t" style="left:811.8px;width:40px;text-align:center;top:784.0px;font-size:10.5px;color:#e8e8e8">420</div>
<div class="t" style="left:840.4px;width:40px;text-align:center;top:784.0px;font-size:10.5px;color:#e8e8e8">440</div>
<div class="t" style="left:869.0px;width:40px;text-align:center;top:784.0px;font-size:10.5px;color:#e8e8e8">460</div>
<div class="t" style="left:897.5px;width:40px;text-align:center;top:784.0px;font-size:10.5px;color:#e8e8e8">480</div>
<div class="t" style="left:926.0px;width:40px;text-align:center;top:784.0px;font-size:10.5px;color:#e8e8e8">500</div>
<div class="t" style="left:954.6px;width:40px;text-align:center;top:784.0px;font-size:10.5px;color:#e8e8e8">520</div>
<div class="t" style="left:983.2px;width:40px;text-align:center;top:784.0px;font-size:10.5px;color:#e8e8e8">540</div>
<div class="t" style="left:1011.7px;width:40px;text-align:center;top:784.0px;font-size:10.5px;color:#e8e8e8">560</div>
<div class="t" style="left:1040.2px;width:40px;text-align:center;top:784.0px;font-size:10.5px;color:#e8e8e8">580</div>
<div class="t" style="left:1068.8px;width:40px;text-align:center;top:784.0px;font-size:10.5px;color:#e8e8e8">600</div>
<div class="t" style="left:1097.3px;width:40px;text-align:center;top:784.0px;font-size:10.5px;color:#e8e8e8">620</div>
<div class="t" style="left:1125.9px;width:40px;text-align:center;top:784.0px;font-size:10.5px;color:#e8e8e8">640</div>
<div class="t" style="left:1154.5px;width:40px;text-align:center;top:784.0px;font-size:10.5px;color:#e8e8e8">660</div>
<div class="t" style="left:1183.0px;width:40px;text-align:center;top:784.0px;font-size:10.5px;color:#e8e8e8">680</div>
<div class="t" style="left:695px;top:799.5px;font-size:11.5px;color:#e8e8e8">Time (ms)</div>
<svg class="a" style="left:189px;top:800px" width="14" height="14"><rect x="0.9" y="0.9" width="11.4" height="11.4" rx="2" fill="#000" stroke="#fff" stroke-width="1.7"/><path d="M3.6 6.6h6M6.6 3.6v6" stroke="#fff" stroke-width="1.6"/></svg>
<svg class="a" style="left:1211px;top:798px" width="18" height="18" viewBox="-9 -9 18 18"><path d="M-1.25 -4.22 L-1.10 -6.51 L1.10 -6.51 L1.25 -4.22 L3.03 -3.19 L5.09 -4.21 L6.19 -2.30 L4.28 -1.03 L4.28 1.03 L6.19 2.30 L5.09 4.21 L3.03 3.19 L1.25 4.22 L1.10 6.51 L-1.10 6.51 L-1.25 4.22 L-3.03 3.19 L-5.09 4.21 L-6.19 2.30 L-4.28 1.03 L-4.28 -1.03 L-6.19 -2.30 L-5.09 -4.21 L-3.03 -3.19Z" fill="none" stroke="#fff" stroke-width="1.5" stroke-linejoin="round"/><circle r="1.9" fill="none" stroke="#fff" stroke-width="1.4"/></svg>
<div class="a" style="left:475px;top:209.5px;width:490px;height:381px;background:#1e1f21;box-shadow:0 0 0 0.5px #111"></div>
<div class="a" style="left:475px;top:209.5px;width:490px;height:20.5px;background:linear-gradient(#454545,#2e2e2e)"></div>
<svg class="a" style="left:481px;top:213px" width="14" height="14"><circle cx="7" cy="7" r="6.3" fill="#5a5a5a"/><path d="M4.3 4.3l5.4 5.4M9.7 4.3l-5.4 5.4" stroke="#2e2e2e" stroke-width="1.8"/></svg>
<div class="t" style="left:0;width:1440px;text-align:center;top:214px;font-size:11px;font-weight:bold;color:#f4f4f4">All Bands</div>
<div class="a" style="left:485px;top:239px;width:470px;height:222px;background:#fff"></div>
<div class="a" style="left:485px;top:239px;width:470px;height:24.5px;background:linear-gradient(#dedede,#c8c8c8 50%,#acacac)"></div>
<div class="t" style="left:489.0px;top:248.5px;font-size:10px;font-weight:bold;color:#2a2a2a;text-shadow:none;-webkit-text-stroke:0">Filter</div>
<div class="a" style="left:534.4px;top:239px;width:1px;height:24.5px;background:#9a9a9a"></div>
<div class="t" style="left:538.9px;top:248.5px;font-size:10px;font-weight:bold;color:#2a2a2a;text-shadow:none;-webkit-text-stroke:0">Band</div>
<div class="a" style="left:584.3px;top:239px;width:1px;height:24.5px;background:#9a9a9a"></div>
<div class="t" style="left:588.8px;top:248.5px;font-size:10px;font-weight:bold;color:#2a2a2a;text-shadow:none;-webkit-text-stroke:0">RT60</div>
<div class="a" style="left:634.2px;top:239px;width:1px;height:24.5px;background:#9a9a9a"></div>
<div class="t" style="left:638.7px;top:248.5px;font-size:10px;font-weight:bold;color:#2a2a2a;text-shadow:none;-webkit-text-stroke:0">EDT</div>
<div class="a" style="left:684.1px;top:239px;width:1px;height:24.5px;background:#9a9a9a"></div>
<div class="t" style="left:688.6px;top:248.5px;font-size:10px;font-weight:bold;color:#2a2a2a;text-shadow:none;-webkit-text-stroke:0">D/R</div>
<div class="a" style="left:734.0px;top:239px;width:1px;height:24.5px;background:#9a9a9a"></div>
<div class="t" style="left:738.5px;top:248.5px;font-size:10px;font-weight:bold;color:#2a2a2a;text-shadow:none;-webkit-text-stroke:0">C10</div>
<div class="a" style="left:783.9px;top:239px;width:1px;height:24.5px;background:#9a9a9a"></div>
<div class="t" style="left:788.4px;top:248.5px;font-size:10px;font-weight:bold;color:#2a2a2a;text-shadow:none;-webkit-text-stroke:0">C35</div>
<div class="a" style="left:833.8px;top:239px;width:1px;height:24.5px;background:#9a9a9a"></div>
<div class="t" style="left:838.3px;top:248.5px;font-size:10px;font-weight:bold;color:#2a2a2a;text-shadow:none;-webkit-text-stroke:0">C50</div>
<div class="a" style="left:883.7px;top:239px;width:1px;height:24.5px;background:#9a9a9a"></div>
<div class="t" style="left:888.2px;top:248.5px;font-size:10px;font-weight:bold;color:#2a2a2a;text-shadow:none;-webkit-text-stroke:0">C80</div>
<div class="a" style="left:933.5px;top:239px;width:1px;height:24.5px;background:#9a9a9a"></div>
<div class="a" style="left:485px;top:265px;width:449px;height:195.5px;overflow:hidden">
<div class="t" style="left:3.0px;top:-3.4px;font-size:10.5px;color:#1e1e1e;text-shadow:none;-webkit-text-stroke:0">1/3</div>
<div class="t" style="left:52.9px;top:-3.4px;font-size:10.5px;color:#1e1e1e;text-shadow:none;-webkit-text-stroke:0">2.5 kHz</div>
<div class="t" style="left:102.8px;top:-3.4px;font-size:10.5px;color:#1e1e1e;text-shadow:none;-webkit-text-stroke:0">0.17</div>
<div class="t" style="left:152.7px;top:-3.4px;font-size:10.5px;color:#1e1e1e;text-shadow:none;-webkit-text-stroke:0">0.02</div>
<div class="t" style="left:202.6px;top:-3.4px;font-size:10.5px;color:#1e1e1e;text-shadow:none;-webkit-text-stroke:0">9.54</div>
<div class="t" style="left:252.5px;top:-3.4px;font-size:10.5px;color:#1e1e1e;text-shadow:none;-webkit-text-stroke:0">13.25</div>
<div class="t" style="left:302.4px;top:-3.4px;font-size:10.5px;color:#1e1e1e;text-shadow:none;-webkit-text-stroke:0">22.43</div>
<div class="t" style="left:352.3px;top:-3.4px;font-size:10.5px;color:#1e1e1e;text-shadow:none;-webkit-text-stroke:0">27.39</div>
<div class="t" style="left:402.2px;top:-3.4px;font-size:10.5px;color:#1e1e1e;text-shadow:none;-webkit-text-stroke:0">38.94</div>
<div class="t" style="left:3.0px;top:16.9px;font-size:10.5px;color:#1e1e1e;text-shadow:none;-webkit-text-stroke:0">1/3</div>
<div class="t" style="left:52.9px;top:16.9px;font-size:10.5px;color:#1e1e1e;text-shadow:none;-webkit-text-stroke:0">3.2 kHz</div>
<div class="t" style="left:102.8px;top:16.9px;font-size:10.5px;color:#1e1e1e;text-shadow:none;-webkit-text-stroke:0">0.21</div>
<div class="t" style="left:152.7px;top:16.9px;font-size:10.5px;color:#1e1e1e;text-shadow:none;-webkit-text-stroke:0">0.01</div>
<div class="t" style="left:202.6px;top:16.9px;font-size:10.5px;color:#1e1e1e;text-shadow:none;-webkit-text-stroke:0">9.64</div>
<div class="t" style="left:252.5px;top:16.9px;font-size:10.5px;color:#1e1e1e;text-shadow:none;-webkit-text-stroke:0">16.06</div>
<div class="t" style="left:302.4px;top:16.9px;font-size:10.5px;color:#1e1e1e;text-shadow:none;-webkit-text-stroke:0">23.26</div>
<div class="t" style="left:352.3px;top:16.9px;font-size:10.5px;color:#1e1e1e;text-shadow:none;-webkit-text-stroke:0">27.21</div>
<div class="t" style="left:402.2px;top:16.9px;font-size:10.5px;color:#1e1e1e;text-shadow:none;-webkit-text-stroke:0">35.16</div>
<div class="t" style="left:3.0px;top:37.2px;font-size:10.5px;color:#1e1e1e;text-shadow:none;-webkit-text-stroke:0">1/3</div>
<div class="t" style="left:52.9px;top:37.2px;font-size:10.5px;color:#1e1e1e;text-shadow:none;-webkit-text-stroke:0">4 kHz</div>
<div class="t" style="left:102.8px;top:37.2px;font-size:10.5px;color:#1e1e1e;text-shadow:none;-webkit-text-stroke:0">0.19</div>
<div class="t" style="left:152.7px;top:37.2px;font-size:10.5px;color:#1e1e1e;text-shadow:none;-webkit-text-stroke:0">0.01</div>
<div class="t" style="left:202.6px;top:37.2px;font-size:10.5px;color:#1e1e1e;text-shadow:none;-webkit-text-stroke:0">9.59</div>
<div class="t" style="left:252.5px;top:37.2px;font-size:10.5px;color:#1e1e1e;text-shadow:none;-webkit-text-stroke:0">15.49</div>
<div class="t" style="left:302.4px;top:37.2px;font-size:10.5px;color:#1e1e1e;text-shadow:none;-webkit-text-stroke:0">24.08</div>
<div class="t" style="left:352.3px;top:37.2px;font-size:10.5px;color:#1e1e1e;text-shadow:none;-webkit-text-stroke:0">28.77</div>
<div class="t" style="left:402.2px;top:37.2px;font-size:10.5px;color:#1e1e1e;text-shadow:none;-webkit-text-stroke:0">36.89</div>
<div class="t" style="left:3.0px;top:57.5px;font-size:10.5px;color:#1e1e1e;text-shadow:none;-webkit-text-stroke:0">1/3</div>
<div class="t" style="left:52.9px;top:57.5px;font-size:10.5px;color:#1e1e1e;text-shadow:none;-webkit-text-stroke:0">5 kHz</div>
<div class="t" style="left:102.8px;top:57.5px;font-size:10.5px;color:#1e1e1e;text-shadow:none;-webkit-text-stroke:0">0.21</div>
<div class="t" style="left:152.7px;top:57.5px;font-size:10.5px;color:#1e1e1e;text-shadow:none;-webkit-text-stroke:0">0.00</div>
<div class="t" style="left:202.6px;top:57.5px;font-size:10.5px;color:#1e1e1e;text-shadow:none;-webkit-text-stroke:0">9.58</div>
<div class="t" style="left:252.5px;top:57.5px;font-size:10.5px;color:#1e1e1e;text-shadow:none;-webkit-text-stroke:0">14.80</div>
<div class="t" style="left:302.4px;top:57.5px;font-size:10.5px;color:#1e1e1e;text-shadow:none;-webkit-text-stroke:0">23.96</div>
<div class="t" style="left:352.3px;top:57.5px;font-size:10.5px;color:#1e1e1e;text-shadow:none;-webkit-text-stroke:0">27.60</div>
<div class="t" style="left:402.2px;top:57.5px;font-size:10.5px;color:#1e1e1e;text-shadow:none;-webkit-text-stroke:0">34.68</div>
<div class="t" style="left:3.0px;top:77.8px;font-size:10.5px;color:#1e1e1e;text-shadow:none;-webkit-text-stroke:0">1/3</div>
<div class="t" style="left:52.9px;top:77.8px;font-size:10.5px;color:#1e1e1e;text-shadow:none;-webkit-text-stroke:0">6.3 kHz</div>
<div class="t" style="left:102.8px;top:77.8px;font-size:10.5px;color:#1e1e1e;text-shadow:none;-webkit-text-stroke:0">0.22</div>
<div class="t" style="left:152.7px;top:77.8px;font-size:10.5px;color:#1e1e1e;text-shadow:none;-webkit-text-stroke:0">0.01</div>
<div class="t" style="left:202.6px;top:77.8px;font-size:10.5px;color:#1e1e1e;text-shadow:none;-webkit-text-stroke:0">9.78</div>
<div class="t" style="left:252.5px;top:77.8px;font-size:10.5px;color:#1e1e1e;text-shadow:none;-webkit-text-stroke:0">15.80</div>
<div class="t" style="left:302.4px;top:77.8px;font-size:10.5px;color:#1e1e1e;text-shadow:none;-webkit-text-stroke:0">23.90</div>
<div class="t" style="left:352.3px;top:77.8px;font-size:10.5px;color:#1e1e1e;text-shadow:none;-webkit-text-stroke:0">28.52</div>
<div class="t" style="left:402.2px;top:77.8px;font-size:10.5px;color:#1e1e1e;text-shadow:none;-webkit-text-stroke:0">34.26</div>
<div class="t" style="left:3.0px;top:98.1px;font-size:10.5px;color:#1e1e1e;text-shadow:none;-webkit-text-stroke:0">1/3</div>
<div class="t" style="left:52.9px;top:98.1px;font-size:10.5px;color:#1e1e1e;text-shadow:none;-webkit-text-stroke:0">8 kHz</div>
<div class="t" style="left:102.8px;top:98.1px;font-size:10.5px;color:#1e1e1e;text-shadow:none;-webkit-text-stroke:0">0.20</div>
<div class="t" style="left:152.7px;top:98.1px;font-size:10.5px;color:#1e1e1e;text-shadow:none;-webkit-text-stroke:0">0.01</div>
<div class="t" style="left:202.6px;top:98.1px;font-size:10.5px;color:#1e1e1e;text-shadow:none;-webkit-text-stroke:0">9.60</div>
<div class="t" style="left:252.5px;top:98.1px;font-size:10.5px;color:#1e1e1e;text-shadow:none;-webkit-text-stroke:0">15.31</div>
<div class="t" style="left:302.4px;top:98.1px;font-size:10.5px;color:#1e1e1e;text-shadow:none;-webkit-text-stroke:0">25.79</div>
<div class="t" style="left:352.3px;top:98.1px;font-size:10.5px;color:#1e1e1e;text-shadow:none;-webkit-text-stroke:0">29.38</div>
<div class="t" style="left:402.2px;top:98.1px;font-size:10.5px;color:#1e1e1e;text-shadow:none;-webkit-text-stroke:0">35.76</div>
<div class="t" style="left:3.0px;top:118.4px;font-size:10.5px;color:#1e1e1e;text-shadow:none;-webkit-text-stroke:0">1/3</div>
<div class="t" style="left:52.9px;top:118.4px;font-size:10.5px;color:#1e1e1e;text-shadow:none;-webkit-text-stroke:0">10 kHz</div>
<div class="t" style="left:102.8px;top:118.4px;font-size:10.5px;color:#1e1e1e;text-shadow:none;-webkit-text-stroke:0">0.20</div>
<div class="t" style="left:152.7px;top:118.4px;font-size:10.5px;color:#1e1e1e;text-shadow:none;-webkit-text-stroke:0">0.01</div>
<div class="t" style="left:202.6px;top:118.4px;font-size:10.5px;color:#1e1e1e;text-shadow:none;-webkit-text-stroke:0">9.70</div>
<div class="t" style="left:252.5px;top:118.4px;font-size:10.5px;color:#1e1e1e;text-shadow:none;-webkit-text-stroke:0">14.61</div>
<div class="t" style="left:302.4px;top:118.4px;font-size:10.5px;color:#1e1e1e;text-shadow:none;-webkit-text-stroke:0">24.04</div>
<div class="t" style="left:352.3px;top:118.4px;font-size:10.5px;color:#1e1e1e;text-shadow:none;-webkit-text-stroke:0">28.91</div>
<div class="t" style="left:402.2px;top:118.4px;font-size:10.5px;color:#1e1e1e;text-shadow:none;-webkit-text-stroke:0">35.29</div>
<div class="t" style="left:3.0px;top:138.7px;font-size:10.5px;color:#1e1e1e;text-shadow:none;-webkit-text-stroke:0">1/3</div>
<div class="t" style="left:52.9px;top:138.7px;font-size:10.5px;color:#1e1e1e;text-shadow:none;-webkit-text-stroke:0">12.5 kHz</div>
<div class="t" style="left:102.8px;top:138.7px;font-size:10.5px;color:#1e1e1e;text-shadow:none;-webkit-text-stroke:0">0.17</div>
<div class="t" style="left:152.7px;top:138.7px;font-size:10.5px;color:#1e1e1e;text-shadow:none;-webkit-text-stroke:0">0.00</div>
<div class="t" style="left:202.6px;top:138.7px;font-size:10.5px;color:#1e1e1e;text-shadow:none;-webkit-text-stroke:0">9.55</div>
<div class="t" style="left:252.5px;top:138.7px;font-size:10.5px;color:#1e1e1e;text-shadow:none;-webkit-text-stroke:0">18.52</div>
<div class="t" style="left:302.4px;top:138.7px;font-size:10.5px;color:#1e1e1e;text-shadow:none;-webkit-text-stroke:0">28.76</div>
<div class="t" style="left:352.3px;top:138.7px;font-size:10.5px;color:#1e1e1e;text-shadow:none;-webkit-text-stroke:0">32.42</div>
<div class="t" style="left:402.2px;top:138.7px;font-size:10.5px;color:#1e1e1e;text-shadow:none;-webkit-text-stroke:0">40.38</div>
<div class="t" style="left:3.0px;top:159.0px;font-size:10.5px;color:#1e1e1e;text-shadow:none;-webkit-text-stroke:0">1/3</div>
<div class="t" style="left:52.9px;top:159.0px;font-size:10.5px;color:#1e1e1e;text-shadow:none;-webkit-text-stroke:0">16 kHz</div>
<div class="t" style="left:102.8px;top:159.0px;font-size:10.5px;color:#1e1e1e;text-shadow:none;-webkit-text-stroke:0">0.20</div>
<div class="t" style="left:152.7px;top:159.0px;font-size:10.5px;color:#1e1e1e;text-shadow:none;-webkit-text-stroke:0">0.00</div>
<div class="t" style="left:202.6px;top:159.0px;font-size:10.5px;color:#1e1e1e;text-shadow:none;-webkit-text-stroke:0">10.21</div>
<div class="t" style="left:252.5px;top:159.0px;font-size:10.5px;color:#1e1e1e;text-shadow:none;-webkit-text-stroke:0">20.24</div>
<div class="t" style="left:302.4px;top:159.0px;font-size:10.5px;color:#1e1e1e;text-shadow:none;-webkit-text-stroke:0">28.44</div>
<div class="t" style="left:352.3px;top:159.0px;font-size:10.5px;color:#1e1e1e;text-shadow:none;-webkit-text-stroke:0">32.04</div>
<div class="t" style="left:402.2px;top:159.0px;font-size:10.5px;color:#1e1e1e;text-shadow:none;-webkit-text-stroke:0">40.15</div>
<div class="t" style="left:3.0px;top:179.3px;font-size:10.5px;color:#1e1e1e;text-shadow:none;-webkit-text-stroke:0">1/3</div>
<div class="t" style="left:52.9px;top:179.3px;font-size:10.5px;color:#1e1e1e;text-shadow:none;-webkit-text-stroke:0">20 kHz</div>
<div class="t" style="left:102.8px;top:179.3px;font-size:10.5px;color:#1e1e1e;text-shadow:none;-webkit-text-stroke:0">0.17</div>
<div class="t" style="left:152.7px;top:179.3px;font-size:10.5px;color:#1e1e1e;text-shadow:none;-webkit-text-stroke:0">0.00</div>
<div class="t" style="left:202.6px;top:179.3px;font-size:10.5px;color:#1e1e1e;text-shadow:none;-webkit-text-stroke:0">9.74</div>
<div class="t" style="left:252.5px;top:179.3px;font-size:10.5px;color:#1e1e1e;text-shadow:none;-webkit-text-stroke:0">17.89</div>
<div class="t" style="left:302.4px;top:179.3px;font-size:10.5px;color:#1e1e1e;text-shadow:none;-webkit-text-stroke:0">26.30</div>
<div class="t" style="left:352.3px;top:179.3px;font-size:10.5px;color:#1e1e1e;text-shadow:none;-webkit-text-stroke:0">28.71</div>
<div class="t" style="left:402.2px;top:179.3px;font-size:10.5px;color:#1e1e1e;text-shadow:none;-webkit-text-stroke:0">0.00</div>
</div>
<svg class="a" style="left:934px;top:264px" width="21" height="196"><path d="M5.5 14.5L12 5.5L18.5 14.5z" fill="#2a2a2a"/><path d="M5.5 177.5L12 186.5L18.5 177.5z" fill="#2a2a2a"/><rect x="5" y="21.5" width="14" height="154" rx="6" fill="#2e2e2e"/></svg>
<div class="btn" style="left:485px;top:470.5px;width:91.5px;height:16px;line-height:16px;font-size:11.2px">Calculate STI</div>
<div class="inp" style="left:530px;top:497px;width:47px;height:19px"></div>
<div class="t" style="right:891px;top:501px;font-size:11.2px;color:#eee">STI:</div>
<div class="inp" style="left:530px;top:525px;width:47px;height:19px"></div>
<div class="t" style="right:891px;top:529px;font-size:11.2px;letter-spacing:-0.6px;color:#eee">STIPA(IR):</div>
<div class="inp" style="left:530px;top:552.5px;width:47px;height:19px"></div>
<div class="t" style="right:891px;top:556.5px;font-size:11.2px;color:#eee">CIS:</div>
<div class="inp" style="left:706px;top:469.5px;width:46.5px;height:19px"><span class="t" style="left:5px;top:6px">1.35</span></div>
<div class="t" style="right:715.5px;top:474.0px;font-size:11.5px;color:#eee">Bass Ratio:</div>
<div class="inp" style="left:706px;top:497px;width:46.5px;height:19px"><span class="t" style="left:5px;top:6px">0.31</span></div>
<div class="t" style="right:715.5px;top:501.5px;font-size:11.5px;color:#eee">T Low:</div>
<div class="inp" style="left:706px;top:525px;width:46.5px;height:19px"><span class="t" style="left:5px;top:6px">0.23</span></div>
<div class="t" style="right:715.5px;top:529.5px;font-size:11.5px;color:#eee">T Mid:</div>
<div class="inp" style="left:881.5px;top:469.5px;width:46.5px;height:19px"><span class="t" style="left:5px;top:6px">2.12</span></div>
<div class="t" style="right:540.5px;top:474.0px;font-size:11.2px;color:#eee">%Alcons (S):</div>
<div class="inp" style="left:881.5px;top:497px;width:46.5px;height:19px"><span class="t" style="left:5px;top:6px">2.58</span></div>
<div class="t" style="right:540.5px;top:501.5px;font-size:11.2px;color:#eee">%Alcons (L):</div>
<div class="btn" style="left:780.5px;top:563.5px;width:54px;height:16px;line-height:16px;font-size:11.5px">Export</div>
<div class="btn" style="left:840.5px;top:563.5px;width:54px;height:16px;line-height:16px;font-size:11.5px">Copy</div>
<div class="btn" style="left:900.5px;top:563.5px;width:54px;height:16px;line-height:16px;font-size:11.5px">OK</div>
<div class="btn" style="left:1235px;top:55.5px;width:67px;height:26px;line-height:26px;background:linear-gradient(#62666a,#55595d);font-size:11.5px;border-radius:3px">Real Time</div>
<div class="btn" style="left:1308.5px;top:55.5px;width:54.5px;height:26px;line-height:26px;background:linear-gradient(#94989c,#84888c);font-size:11.5px;border-radius:3px">Impulse</div>
<div class="btn" style="left:1369px;top:55.5px;width:41.5px;height:26px;line-height:26px;background:linear-gradient(#62666a,#55595d);font-size:11.5px;border-radius:3px">SPL</div>
<div class="a" style="left:1234.5px;top:86.5px;width:177.5px;height:69px;background:#0a0a0a;border:1px solid #585c60;border-radius:0 7px 7px 0"></div>
<div class="t" style="left:1270px;top:109px;font-size:25px;font-weight:bold;color:#fff">0.0</div>
<div class="t" style="right:32px;top:94px;font-size:12px;color:#eee">None</div>
<div class="t" style="right:32px;top:114px;font-size:12px;color:#eee">dB FS Peak</div>
<div class="t" style="right:33px;top:135px;font-size:11.5px;color:#eee">Max 0.0</div>
<svg class="a" style="left:1390px;top:96px" width="20" height="52"><path d="M4.5 4h6l-3 4z M4.5 24h6l-3 4z" fill="#eee"/><circle cx="7.5" cy="44.7" r="5" fill="#7a7a7a"/></svg>
<div class="a" style="left:1234px;top:161.5px;width:177.5px;height:544px;background:#1f2224;border:1px solid #585c60;border-radius:8px 8px 0 0"></div>
<div class="t" style="left:1234px;width:177px;text-align:center;top:171.5px;font-size:13px;color:#f0f0f0">Impulse Response</div>
<div class="a" style="left:1243px;top:192px;width:160px;height:2px;background:#4d5154"></div>
<div class="t" style="right:139px;top:205px;font-size:12px;color:#eee">FFT:</div>
<div class="dd" style="left:1286.5px;top:202px;width:111px;height:19px"><span class="t" style="left:6px;top:3.5px">32k / 682 ms</span></div>
<div class="t" style="right:139px;top:228px;font-size:12px;color:#eee">Avg:</div>
<div class="dd" style="left:1286.5px;top:225px;width:111px;height:19px"><span class="t" style="left:6px;top:3.5px">8</span></div>
<div class="a" style="left:1244px;top:249px;width:158px;height:16px;background:#5a5e62;border-radius:3px"></div>
<div class="a" style="left:1322.5px;top:249px;width:1px;height:16px;background:#3a3e42"></div>
<div class="a" style="left:1362px;top:249px;width:1px;height:16px;background:#3a3e42"></div>
<svg class="a" style="left:1244px;top:249px" width="158" height="16"><path d="M34 3L43.5 8L34 13z" fill="#fff"/><circle cx="98.5" cy="8" r="5" fill="#fff"/></svg>
<div class="t" style="left:1362px;width:39px;text-align:center;top:251.5px;font-size:11px;color:#eee">Cont</div>
<div class="a" style="left:1244px;top:270.5px;width:158px;height:16.5px;background:#000"></div>
<div class="t" style="left:1244px;width:158px;text-align:center;top:273.5px;font-size:10.5px;color:#eee">Ready</div>
<svg width="0" height="0" style="position:absolute"><defs><radialGradient id="tg" cx="0.45" cy="0.3" r="0.75"><stop offset="0" stop-color="#50d050"/><stop offset="0.5" stop-color="#18a018"/><stop offset="1" stop-color="#0a600a"/></radialGradient><radialGradient id="tb" cx="0.45" cy="0.3" r="0.75"><stop offset="0" stop-color="#8ab0ff"/><stop offset="0.5" stop-color="#3a6af0"/><stop offset="1" stop-color="#1a3aa0"/></radialGradient><radialGradient id="tp" cx="0.45" cy="0.3" r="0.75"><stop offset="0" stop-color="#ff6090"/><stop offset="0.5" stop-color="#e01858"/><stop offset="1" stop-color="#900a38"/></radialGradient></defs></svg>
<div class="a" style="left:1243.5px;top:291.5px;width:157px;height:49.5px;background:#262a2c;border:2px solid #2c7a2c;border-radius:4px"></div>
<svg class="a" style="left:1247px;top:295.5px" width="22" height="22"><circle cx="10.5" cy="10" r="9" fill="url(#tg)"/></svg>
<div class="t" style="left:1274px;top:301.0px;font-size:12px;color:#f4f4f4">TF 1</div>
<div class="a" style="left:1381px;top:299.5px;width:12.5px;height:12.5px;background:#fff;border-radius:1.5px"></div>
<svg class="a" style="left:1381px;top:299.5px" width="13" height="13"><path d="M2.5 6.5L5.2 9.5L10.5 2.5" stroke="#111" stroke-width="2" fill="none"/></svg>
<div class="t" style="left:1252.5px;top:316.5px;font-size:7px;font-weight:bold;color:#fff">M</div>
<div class="t" style="left:1253px;top:325.5px;font-size:7px;font-weight:bold;color:#fff">R</div>
<svg class="a" style="left:1259px;top:318.5px" width="70" height="15"><rect x="0" y="0.5" width="69" height="5" fill="#050505"/><rect x="0" y="9.5" width="69" height="5" fill="#050505"/><rect x="0.5" y="0.5" width="20" height="5" fill="#20b020"/><path d="M42 0V15M62 0V15" stroke="#262a2c" stroke-width="1.5"/></svg>
<div class="a" style="left:1333px;top:317.0px;width:44.5px;height:16.5px;background:linear-gradient(#d8d8d8,#c4c4c4);"><span class="t" style="left:5px;top:2.5px;font-size:12.5px;color:#1a1a1a;text-shadow:none;-webkit-text-stroke:0">2.06</span></div>
<div class="a" style="left:1382.8px;top:320.5px;width:9px;height:9px;border-radius:50%;background:#5a5c5e"></div>
<div class="a" style="left:1243.5px;top:346.5px;width:157px;height:49.5px;background:#262a2c;border:2px solid #36509a;border-radius:4px"></div>
<svg class="a" style="left:1247px;top:350.5px" width="22" height="22"><circle cx="10.5" cy="10" r="9" fill="url(#tb)"/></svg>
<div class="t" style="left:1274px;top:356.0px;font-size:12px;color:#f4f4f4">TF 2</div>
<div class="a" style="left:1381px;top:354.5px;width:12.5px;height:12.5px;background:#fff;border-radius:1.5px"></div>
<svg class="a" style="left:1381px;top:354.5px" width="13" height="13"><path d="M2.5 6.5L5.2 9.5L10.5 2.5" stroke="#111" stroke-width="2" fill="none"/></svg>
<div class="t" style="left:1252.5px;top:371.5px;font-size:7px;font-weight:bold;color:#fff">M</div>
<div class="t" style="left:1253px;top:380.5px;font-size:7px;font-weight:bold;color:#fff">R</div>
<svg class="a" style="left:1259px;top:373.5px" width="70" height="15"><rect x="0" y="0.5" width="69" height="5" fill="#050505"/><rect x="0" y="9.5" width="69" height="5" fill="#050505"/><rect x="0.5" y="0.5" width="20" height="5" fill="#20b020"/><path d="M42 0V15M62 0V15" stroke="#262a2c" stroke-width="1.5"/></svg>
<div class="a" style="left:1333px;top:372.0px;width:44.5px;height:16.5px;background:linear-gradient(#d8d8d8,#c4c4c4);"><span class="t" style="left:5px;top:2.5px;font-size:12.5px;color:#1a1a1a;text-shadow:none;-webkit-text-stroke:0">1.62</span></div>
<div class="a" style="left:1382.8px;top:375.5px;width:9px;height:9px;border-radius:50%;background:#5a5c5e"></div>
<div class="a" style="left:1243.5px;top:400.3px;width:157px;height:49.5px;background:#606264;border:2px solid #b8245a;border-radius:4px;box-shadow:inset 0 0 0 1px #e07ca0"></div>
<svg class="a" style="left:1247px;top:404.3px" width="22" height="22"><circle cx="10.5" cy="10" r="9" fill="url(#tp)"/></svg>
<div class="t" style="left:1274px;top:409.8px;font-size:12px;color:#f4f4f4">TF 3</div>
<div class="a" style="left:1381px;top:408.3px;width:12.5px;height:12.5px;background:#fff;border-radius:1.5px"></div>
<svg class="a" style="left:1381px;top:408.3px" width="13" height="13"><path d="M2.5 6.5L5.2 9.5L10.5 2.5" stroke="#111" stroke-width="2" fill="none"/></svg>
<div class="t" style="left:1252.5px;top:425.3px;font-size:7px;font-weight:bold;color:#fff">M</div>
<div class="t" style="left:1253px;top:434.3px;font-size:7px;font-weight:bold;color:#fff">R</div>
<svg class="a" style="left:1259px;top:427.3px" width="70" height="15"><rect x="0" y="0.5" width="69" height="5" fill="#050505"/><rect x="0" y="9.5" width="69" height="5" fill="#050505"/><rect x="0.5" y="0.5" width="21" height="5" fill="#20b020"/><path d="M42 0V15M62 0V15" stroke="#606264" stroke-width="1.5"/></svg>
<div class="a" style="left:1333px;top:425.8px;width:44.5px;height:16.5px;background:linear-gradient(#d8d8d8,#c4c4c4);"><span class="t" style="left:5px;top:2.5px;font-size:12.5px;color:#1a1a1a;text-shadow:none;-webkit-text-stroke:0">2.06</span></div>
<div class="btn" style="left:1244.5px;top:455.5px;width:155px;height:24.5px;line-height:22.5px;background:#2a2d30;border:1px solid #50555a;border-radius:4px;font-size:11.2px">+ TF Engine</div>
<div class="t" style="right:135px;top:634.5px;font-size:12px;color:#eee">Filters:</div>
<div class="dd" style="left:1287px;top:631px;width:111px;height:19px"><span class="t" style="left:6px;top:3.5px">Octave</span></div>
<div class="t" style="right:135px;top:657.5px;font-size:12px;color:#eee">Band:</div>
<div class="dd" style="left:1287px;top:654.5px;width:111px;height:18.5px"><span class="t" style="left:6px;top:3.5px">Broadband</span></div>
<div class="a" style="left:1239px;top:677.5px;width:167.5px;height:2px;background:#4d5154"></div>
<div class="a" style="left:1239.5px;top:684.5px;width:165px;height:16px;background:#5a5e62;border-radius:3px"></div>
<div class="a" style="left:1294.5px;top:684.5px;width:55px;height:16px;background:#8a8e92"></div>
<div class="t" style="left:1239.5px;width:55px;text-align:center;top:687.5px;font-size:11px;color:#f0f0f0">All Bands</div>
<div class="t" style="left:1294.5px;width:55px;text-align:center;top:687.5px;font-size:11px;color:#f0f0f0">T60</div>
<div class="t" style="left:1350px;width:54.5px;text-align:center;top:687.9px;font-size:10.4px;color:#f0f0f0">Schroeder</div>
<div class="a" style="left:1235px;top:711.5px;width:176px;height:16px;background:#5a5e62;border-radius:3px"></div>
<div class="a" style="left:1322px;top:711.5px;width:1.5px;height:16px;background:#3a3e42"></div>
<div class="t" style="left:1235px;width:87px;text-align:center;top:713.5px;font-size:12px;color:#f0f0f0">View</div>
<div class="t" style="left:1323px;width:88px;text-align:center;top:713.5px;font-size:12px;color:#f0f0f0">Timer</div>
<div class="a" style="left:1234.5px;top:733.5px;width:176px;height:81px;background:#1e2123;border:1px solid #585c60;border-radius:0 0 8px 0"></div>
<div class="t" style="left:1234px;width:177px;text-align:center;top:739.5px;font-size:13px;color:#f0f0f0">Signal Generator</div>
<div class="a" style="left:1239px;top:758.5px;width:163.5px;height:1.5px;background:#4d5154"></div>
<div class="dd" style="left:1239px;top:770.5px;width:76px;height:18px;font-size:11px"><span class="t" style="left:5.5px;top:3.5px">Pink Noise</span></div>
<div class="dd" style="left:1239px;top:792px;width:76px;height:17.5px;font-size:11.5px"><span class="t" style="left:5.5px;top:3px">Output</span></div>
<div class="a" style="left:1321px;top:771.5px;width:41px;height:15px;background:#d4d4d4"><span class="t" style="left:0;width:41px;text-align:center;top:2.5px;font-size:11px;color:#1a1a1a;text-shadow:none;-webkit-text-stroke:0">-12 dB</span></div>
<div class="btn" style="left:1367.5px;top:771px;width:38.5px;height:15.5px;line-height:15.5px;background:#55595c;font-size:12px">On</div>
<div class="btn" style="left:1322px;top:793px;width:39.5px;height:16px;line-height:16px;background:#55595c;font-size:11px;border-radius:1px">-</div>
<div class="btn" style="left:1367.5px;top:793px;width:38.5px;height:16px;line-height:16px;background:#55595c;font-size:11px;border-radius:1px">+</div>
<div class="a" style="left:5px;top:820.5px;width:1407px;height:37.5px;background:#1c1f21;border:1px solid #585c60;border-radius:8px"></div>
<div class="btn" style="left:14.0px;top:826px;width:132.7px;height:26px;line-height:26px;background:linear-gradient(#63676b,#5b5f63);font-size:11.3px;border-radius:1.5px;box-shadow:0 0 0 1px #151719">Data Bar</div>
<div class="btn" style="left:153.3px;top:826px;width:132.7px;height:26px;line-height:26px;background:linear-gradient(#63676b,#5b5f63);font-size:11.3px;border-radius:1.5px;box-shadow:0 0 0 1px #151719">Save IR</div>
<div class="btn" style="left:292.6px;top:826px;width:132.7px;height:26px;line-height:26px;background:linear-gradient(#63676b,#5b5f63);font-size:11.3px;border-radius:1.5px;box-shadow:0 0 0 1px #151719">Save All</div>
<div class="btn" style="left:431.9px;top:826px;width:132.7px;height:26px;line-height:26px;background:linear-gradient(#63676b,#5b5f63);font-size:11.3px;border-radius:1.5px;box-shadow:0 0 0 1px #151719">New Tab</div>
<div class="btn" style="left:571.2px;top:826px;width:132.7px;height:26px;line-height:26px;background:linear-gradient(#63676b,#5b5f63);font-size:11.3px;border-radius:1.5px;box-shadow:0 0 0 1px #151719">New TF</div>
<div class="btn" style="left:710.5px;top:826px;width:132.7px;height:26px;line-height:26px;background:linear-gradient(#63676b,#5b5f63);font-size:11.3px;border-radius:1.5px;box-shadow:0 0 0 1px #151719">IR &lt;&lt;</div>
<div class="btn" style="left:849.8px;top:826px;width:132.7px;height:26px;line-height:26px;background:linear-gradient(#63676b,#5b5f63);font-size:11.3px;border-radius:1.5px;box-shadow:0 0 0 1px #151719">IR &gt;&gt;</div>
<div class="btn" style="left:989.1px;top:826px;width:132.7px;height:26px;line-height:26px;background:linear-gradient(#63676b,#5b5f63);font-size:11.3px;border-radius:1.5px;box-shadow:0 0 0 1px #151719">Sync Ld</div>
<div class="btn" style="left:1128.4px;top:826px;width:132.7px;height:26px;line-height:26px;background:linear-gradient(#63676b,#5b5f63);font-size:11.3px;border-radius:1.5px;box-shadow:0 0 0 1px #151719">SPL Meter</div>
<div class="btn" style="left:1267.7px;top:826px;width:132.7px;height:26px;line-height:26px;background:linear-gradient(#63676b,#5b5f63);font-size:11.3px;border-radius:1.5px;box-shadow:0 0 0 1px #151719">Ctrl Bar</div></body></html>
